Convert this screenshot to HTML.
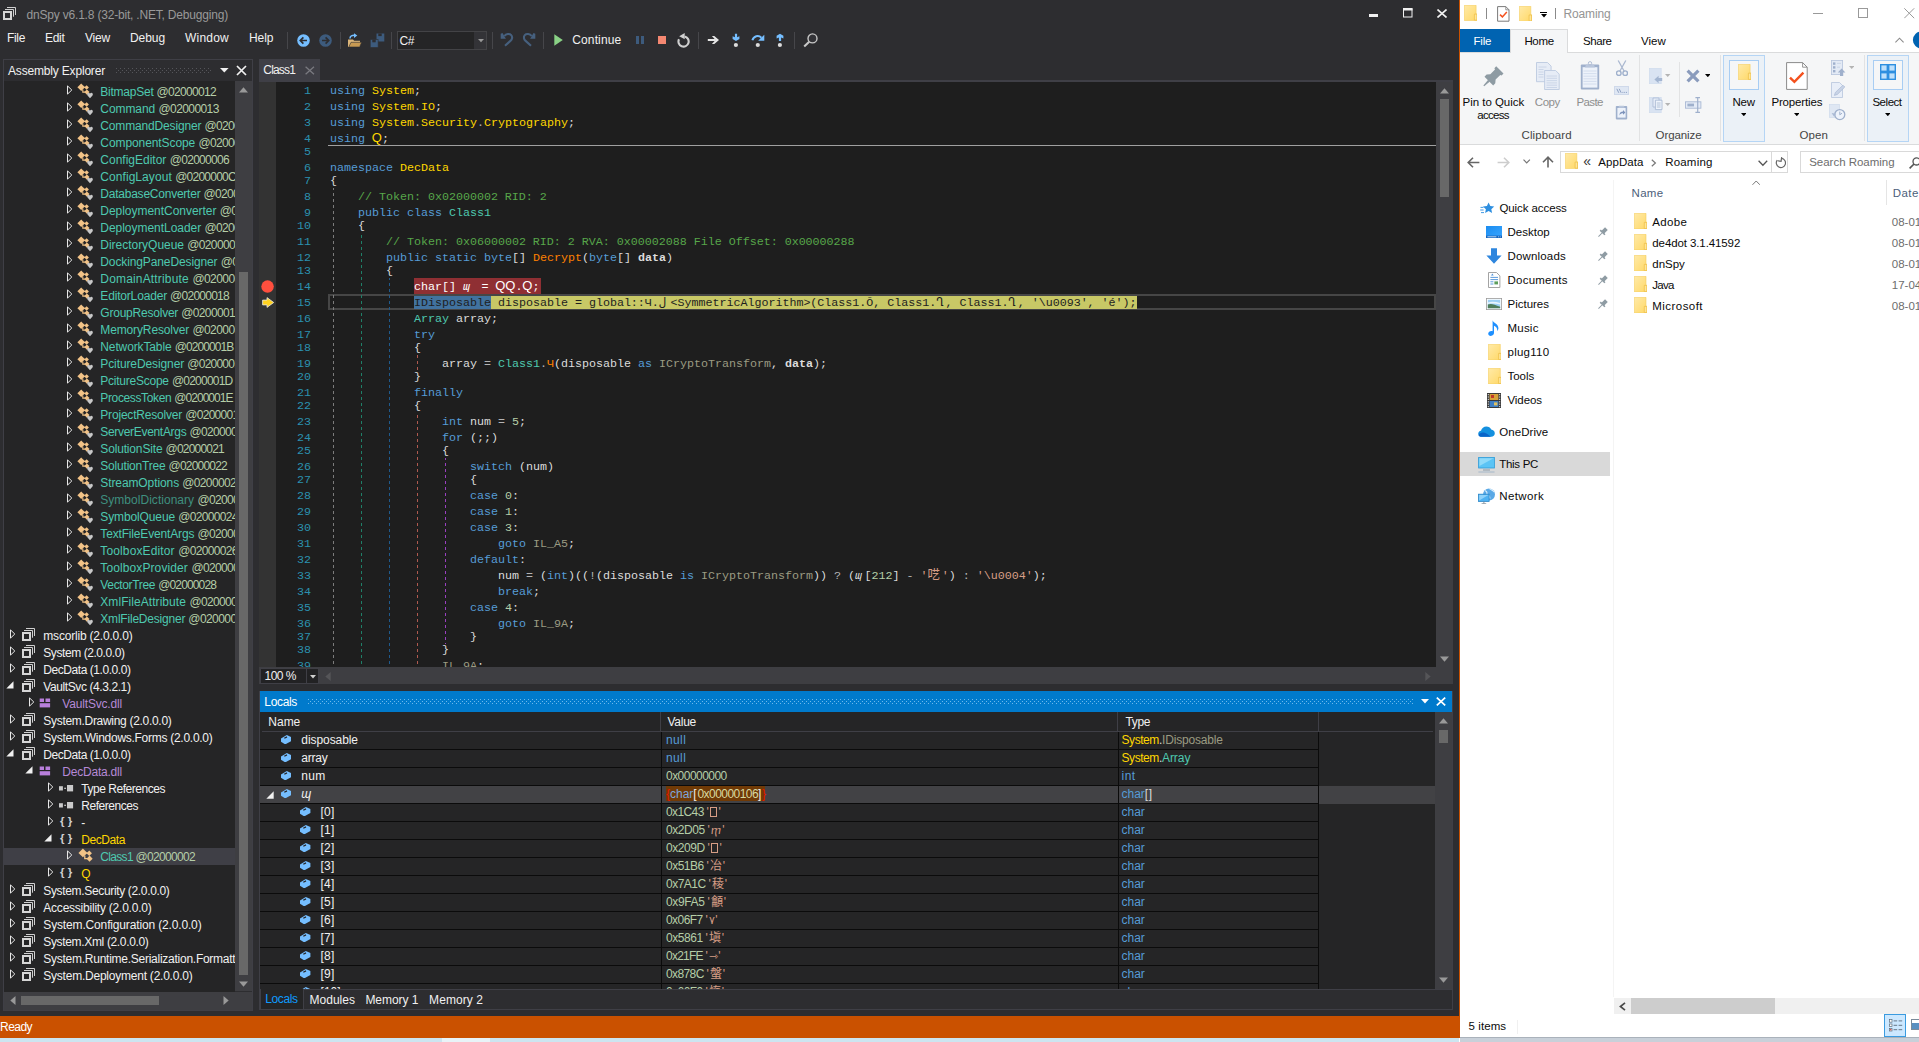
<!DOCTYPE html>
<html><head><meta charset="utf-8"><title>dnSpy</title><style>
html,body{margin:0;padding:0;}
body{width:1919px;height:1042px;overflow:hidden;background:#fff;font-family:"Liberation Sans", "Noto Sans CJK SC", sans-serif;font-size:12px;position:relative;}
.t{position:absolute;white-space:pre;font-size:12px;line-height:17px;}
.r{position:absolute;}
.c{position:absolute;overflow:hidden;}
.m{position:absolute;white-space:pre;font-family:"Liberation Mono","DejaVu Sans Mono","Noto Sans CJK SC",monospace;font-size:11.7px;letter-spacing:-0.02px;line-height:16px;}
.mu{position:absolute;white-space:pre;font-size:13px;line-height:16px;}
</style></head>
<body>
<!-- chrome -->
<div class="r" style="left:0px;top:0px;width:1459px;height:1038px;background:#2d2d30;"></div>
<div class="r" style="left:1459px;top:0px;width:1px;height:1038px;background:#ca5100;"></div>
<svg class="r" style="left:3px;top:7px;" width="14" height="14" viewBox="0 0 14 14"><path d="M4 0.5H12.5V8" fill="none" stroke="#d0d0d0" stroke-width="1"/><path d="M2 2.5H10.5V9.7" fill="none" stroke="#d0d0d0" stroke-width="1"/><rect x="1" y="5" width="7" height="7" fill="none" stroke="#d6d6d6" stroke-width="2"/></svg>
<span class="t" style="left:26.5px;top:7px;color:#999999;letter-spacing:-0.192px;">dnSpy v6.1.8 (32-bit, .NET, Debugging)</span>
<div class="r" style="left:1369px;top:14px;width:9px;height:3px;background:#f1f1f1;"></div>
<svg class="r" style="left:1403px;top:8px;" width="10" height="10" viewBox="0 0 10 10"><rect x="0.5" y="1" width="8.5" height="8" fill="none" stroke="#f1f1f1" stroke-width="1"/><rect x="0" y="0" width="9.5" height="2.5" fill="#f1f1f1"/></svg>
<svg class="r" style="left:1437px;top:9px;" width="10" height="9" viewBox="0 0 10 9"><path d="M0.5 0.5L9.5 8.5M9.5 0.5L0.5 8.5" stroke="#f1f1f1" stroke-width="1.6" fill="none"/></svg>
<span class="t" style="left:7.0px;top:30px;color:#f1f1f1;letter-spacing:-0.336px;">File</span>
<span class="t" style="left:45.0px;top:30px;color:#f1f1f1;letter-spacing:-0.297px;">Edit</span>
<span class="t" style="left:85.0px;top:30px;color:#f1f1f1;letter-spacing:-0.199px;">View</span>
<span class="t" style="left:130.0px;top:30px;color:#f1f1f1;letter-spacing:-0.075px;">Debug</span>
<span class="t" style="left:185.0px;top:30px;color:#f1f1f1;letter-spacing:0.219px;">Window</span>
<span class="t" style="left:249.0px;top:30px;color:#f1f1f1;letter-spacing:-0.047px;">Help</span>
<div class="r" style="left:287px;top:31.5px;width:1px;height:17px;background:#46464a;"></div>
<div class="r" style="left:339.5px;top:31.5px;width:1px;height:17px;background:#46464a;"></div>
<div class="r" style="left:391px;top:31.5px;width:1px;height:17px;background:#46464a;"></div>
<div class="r" style="left:491.5px;top:31.5px;width:1px;height:17px;background:#46464a;"></div>
<div class="r" style="left:543px;top:31.5px;width:1px;height:17px;background:#46464a;"></div>
<div class="r" style="left:698px;top:31.5px;width:1px;height:17px;background:#46464a;"></div>
<div class="r" style="left:794.3px;top:31.5px;width:1px;height:17px;background:#46464a;"></div>
<svg class="r" style="left:296.5px;top:33.5px;" width="13" height="13" viewBox="0 0 13 13"><circle cx="6.5" cy="6.5" r="6.3" fill="#75beff"/><path d="M10 6.5H3.6M6.4 3.4L3.3 6.5L6.4 9.6" stroke="#2d2d30" stroke-width="1.7" fill="none"/></svg>
<svg class="r" style="left:318.5px;top:33.5px;" width="13" height="13" viewBox="0 0 13 13"><circle cx="6.5" cy="6.5" r="6.3" fill="#3d5b7d"/><path d="M3 6.5H9.4M6.6 3.4L9.7 6.5L6.6 9.6" stroke="#2d2d30" stroke-width="1.7" fill="none"/></svg>
<svg class="r" style="left:347px;top:32.5px;" width="16" height="15" viewBox="0 0 16 15">
      <path d="M1 6.5h5l1.2 1.2H13V14H1z" fill="#dcb67a"/>
      <path d="M1.8 14L4 9.3h10.6L12.6 14z" fill="#c89a53" stroke="#2d2d30" stroke-width="0.6"/>
      <path d="M3 5.5C3 3 5 2.2 8 2.4" stroke="#75beff" stroke-width="1.5" fill="none"/>
      <path d="M7 0.2L10.3 2.6L7 5z" fill="#75beff"/>
    </svg>
<svg class="r" style="left:370px;top:32.5px;" width="15" height="15" viewBox="0 0 15 15">
      <path d="M6.5 0.5h7.8v8h-7.8z" fill="#3d5b7d"/><rect x="8.3" y="0.5" width="3.4" height="2.6" fill="#2d2d30"/>
      <path d="M0.3 6.5h7.9v8H0.3z" fill="#3d5b7d" stroke="#2d2d30" stroke-width="0.6"/><rect x="2.3" y="6.7" width="3.4" height="2.6" fill="#2d2d30"/>
    </svg>
<div class="r" style="left:397px;top:31px;width:90px;height:18.5px;background:#252526;box-sizing:border-box;border:1px solid #434346;"></div>
<div class="r" style="left:474px;top:32px;width:12px;height:16.5px;background:#333337;"></div>
<svg class="r" style="left:477.5px;top:38.5px;" width="6" height="4" viewBox="0 0 6 4"><path d="M0 0h6L3 3.2z" fill="#999"/></svg>
<span class="t" style="left:399.5px;top:33px;color:#f1f1f1;letter-spacing:-0.422px;">C#</span>
<svg class="r" style="left:500px;top:32px;" width="14" height="16" viewBox="0 0 14 16"><path d="M0.7 1.7L2.5 0.9L5.9 6.8H0.7z" fill="#46607e"/><path d="M4.4 4C6 1.7 9.6 1.3 11.2 3.1C12.9 5 12 7.5 10.4 8.9L5 13.8" stroke="#46607e" stroke-width="2.1" fill="none"/></svg>
<svg class="r" style="left:521.6px;top:32px;" width="14" height="16" viewBox="0 0 14 16"><g transform="translate(14 0) scale(-1 1)"><path d="M0.7 1.7L2.5 0.9L5.9 6.8H0.7z" fill="#46607e"/><path d="M4.4 4C6 1.7 9.6 1.3 11.2 3.1C12.9 5 12 7.5 10.4 8.9L5 13.8" stroke="#46607e" stroke-width="2.1" fill="none"/></g></svg>
<svg class="r" style="left:554px;top:34px;" width="10" height="12" viewBox="0 0 10 12"><path d="M0.3 0.2L8.8 6L0.3 11.8z" fill="#89d185"/></svg>
<span class="t" style="left:572.3px;top:32px;color:#f1f1f1;letter-spacing:0.119px;">Continue</span>
<div class="r" style="left:635.5px;top:35.5px;width:3px;height:8.7px;background:#3d5b7d;"></div>
<div class="r" style="left:641px;top:35.5px;width:3px;height:8.7px;background:#3d5b7d;"></div>
<div class="r" style="left:657.5px;top:35.7px;width:8.7px;height:8.5px;background:#f48771;"></div>
<svg class="r" style="left:676px;top:32px;" width="16" height="16" viewBox="0 0 16 16"><path d="M3 7.2A5.1 5.1 0 1 0 8.6 4.5" stroke="#d0d0d0" stroke-width="2.1" fill="none"/><path d="M3.2 4.2L8.7 0.9V7.2z" fill="#d0d0d0"/></svg>
<svg class="r" style="left:707px;top:35px;" width="13" height="10" viewBox="0 0 13 10"><path d="M0.8 5H8.5" stroke="#e6e6e6" stroke-width="2"/><path d="M4.9 1h2.4L12 5L7.3 9H4.9L8.5 5z" fill="#e6e6e6"/></svg>
<svg class="r" style="left:731px;top:33px;" width="10" height="15" viewBox="0 0 10 15"><path d="M3.9 0.7h2.2v3.6L8.4 3.2v2.7L5 8L1.6 5.9V3.2L3.9 4.3z" fill="#75beff"/><circle cx="4.9" cy="12" r="2.1" fill="#dcdcdc"/></svg>
<svg class="r" style="left:751px;top:33px;" width="14" height="15" viewBox="0 0 14 15"><path d="M1.4 7.2C2.6 3.2 7.4 1.6 10.4 4.8" stroke="#75beff" stroke-width="2" fill="none"/><path d="M13.3 1.8V7.8H7.2z" fill="#75beff"/><circle cx="6.8" cy="12" r="2.1" fill="#dcdcdc"/></svg>
<svg class="r" style="left:775px;top:33px;" width="10" height="15" viewBox="0 0 10 15"><path d="M3.9 8h2.2V4.4L8.4 5.5V2.8L5 0.7L1.6 2.8v2.7L3.9 4.4z" fill="#75beff"/><circle cx="4.9" cy="12" r="2.1" fill="#dcdcdc"/></svg>
<svg class="r" style="left:802.5px;top:32.5px;" width="16" height="15" viewBox="0 0 16 15"><circle cx="9.5" cy="5.4" r="4.5" stroke="#c8c8c8" stroke-width="1.4" fill="#333337"/><path d="M6.2 8.8L1.2 13.5" stroke="#c8c8c8" stroke-width="2.1"/></svg>
<div class="r" style="left:0px;top:1016px;width:1459px;height:22px;background:#ca5100;"></div>
<span class="t" style="left:0.0px;top:1019px;color:#ffffff;letter-spacing:-0.537px;">Ready</span>
<div class="r" style="left:0px;top:1038px;width:1459px;height:4px;background:#cce5f0;"></div>
<!-- tree -->
<div class="r" style="left:3px;top:59px;width:249.5px;height:951.5px;background:#2d2d30;box-sizing:border-box;border:1px solid #3f3f46;"></div>
<span class="t" style="left:8.0px;top:63px;color:#f1f1f1;letter-spacing:-0.178px;">Assembly Explorer</span>
<svg class="r" style="left:116px;top:68px" width="96" height="5"><defs><pattern id="gp1" width="4" height="4" patternUnits="userSpaceOnUse"><rect x="0" y="0" width="1" height="1" fill="#55555a"/><rect x="2" y="2" width="1" height="1" fill="#55555a"/></pattern></defs><rect width="96" height="5" fill="url(#gp1)"/></svg>
<svg class="r" style="left:220px;top:67.5px;" width="9" height="5" viewBox="0 0 9 5"><path d="M0 0h8.6L4.3 4.5z" fill="#f1f1f1"/></svg>
<svg class="r" style="left:235.5px;top:64.5px;" width="11" height="11" viewBox="0 0 11 11"><path d="M1 1L10 10M10 1L1 10" stroke="#f1f1f1" stroke-width="1.7"/></svg>
<div class="r" style="left:4px;top:81px;width:231px;height:910.5px;background:#252526;"></div>
<div class="r" style="left:235px;top:81px;width:17px;height:910px;background:#3e3e42;"></div>
<svg class="r" style="left:239px;top:87px;" width="9" height="6" viewBox="0 0 9 6"><path d="M4.5 0.3L9 5.5H0z" fill="#999"/></svg>
<svg class="r" style="left:239px;top:980.5px;" width="9" height="6" viewBox="0 0 9 6"><path d="M4.5 5.7L9 0.5H0z" fill="#999"/></svg>
<div class="r" style="left:239px;top:272px;width:9px;height:703px;background:#686868;"></div>
<div class="r" style="left:4px;top:991.5px;width:248px;height:18px;background:#3e3e42;"></div>
<svg class="r" style="left:10px;top:996px;" width="6" height="9" viewBox="0 0 6 9"><path d="M0.3 4.5L5.5 0v9z" fill="#999"/></svg>
<svg class="r" style="left:223px;top:996px;" width="6" height="9" viewBox="0 0 6 9"><path d="M5.7 4.5L0.5 0v9z" fill="#999"/></svg>
<div class="r" style="left:21px;top:996px;width:138px;height:9px;background:#686868;"></div>
<div class="r" style="left:4px;top:848px;width:231px;height:17px;background:#3f3f46;"></div>
<div class="c" style="left:4px;top:81px;width:231px;height:910.5px;">
<svg class="r" style="left:63.0px;top:3.9000000000000004px;" width="7" height="10" viewBox="0 0 7 10"><path d="M0.5 0.9L4.8 5L0.5 9.1z" fill="none" stroke="#e8e8e8" stroke-width="1"/></svg>
<svg class="r" style="left:72.5px;top:2px;" width="16.5" height="16" viewBox="0 0 16.5 16"><g fill="#f2c387"><path d="M0.4 4.2L4.2 0.4L8 4.2L4.2 8z"/><path d="M7.3 4.5L9.6 2.2L11.9 4.5L9.6 6.8z"/><path d="M7.3 9.1L9.9 6.5L12.5 9.1L9.9 11.7z"/><path d="M6.9 3.8h1.4v1H6.9z"/></g><path d="M5.8 6.4V9.1H8.2" stroke="#f2c387" stroke-width="1.1" fill="none"/><path d="M13 15.2L10.5 12.4C9.7 11.3 10.4 9.8 11.6 9.8C12.3 9.8 12.8 10.2 13 10.8C13.2 10.2 13.7 9.8 14.4 9.8C15.6 9.8 16.3 11.3 15.5 12.4z" fill="#c8c8c8"/></svg>
<span class="t" style="left:96.3px;top:3px;color:#4ec9b0;letter-spacing:-0.236px;">BitmapSet </span>
<span class="t" style="left:152.6px;top:3px;color:#b5cea8;letter-spacing:-0.691px;">@02000012</span>
<svg class="r" style="left:63.0px;top:20.9px;" width="7" height="10" viewBox="0 0 7 10"><path d="M0.5 0.9L4.8 5L0.5 9.1z" fill="none" stroke="#e8e8e8" stroke-width="1"/></svg>
<svg class="r" style="left:72.5px;top:19px;" width="16.5" height="16" viewBox="0 0 16.5 16"><g fill="#f2c387"><path d="M0.4 4.2L4.2 0.4L8 4.2L4.2 8z"/><path d="M7.3 4.5L9.6 2.2L11.9 4.5L9.6 6.8z"/><path d="M7.3 9.1L9.9 6.5L12.5 9.1L9.9 11.7z"/><path d="M6.9 3.8h1.4v1H6.9z"/></g><path d="M5.8 6.4V9.1H8.2" stroke="#f2c387" stroke-width="1.1" fill="none"/><path d="M13 15.2L10.5 12.4C9.7 11.3 10.4 9.8 11.6 9.8C12.3 9.8 12.8 10.2 13 10.8C13.2 10.2 13.7 9.8 14.4 9.8C15.6 9.8 16.3 11.3 15.5 12.4z" fill="#c8c8c8"/></svg>
<span class="t" style="left:96.3px;top:20px;color:#4ec9b0;letter-spacing:-0.064px;">Command </span>
<span class="t" style="left:154.5px;top:20px;color:#b5cea8;letter-spacing:-0.595px;">@02000013</span>
<svg class="r" style="left:63.0px;top:37.9px;" width="7" height="10" viewBox="0 0 7 10"><path d="M0.5 0.9L4.8 5L0.5 9.1z" fill="none" stroke="#e8e8e8" stroke-width="1"/></svg>
<svg class="r" style="left:72.5px;top:36px;" width="16.5" height="16" viewBox="0 0 16.5 16"><g fill="#f2c387"><path d="M0.4 4.2L4.2 0.4L8 4.2L4.2 8z"/><path d="M7.3 4.5L9.6 2.2L11.9 4.5L9.6 6.8z"/><path d="M7.3 9.1L9.9 6.5L12.5 9.1L9.9 11.7z"/><path d="M6.9 3.8h1.4v1H6.9z"/></g><path d="M5.8 6.4V9.1H8.2" stroke="#f2c387" stroke-width="1.1" fill="none"/><path d="M13 15.2L10.5 12.4C9.7 11.3 10.4 9.8 11.6 9.8C12.3 9.8 12.8 10.2 13 10.8C13.2 10.2 13.7 9.8 14.4 9.8C15.6 9.8 16.3 11.3 15.5 12.4z" fill="#c8c8c8"/></svg>
<span class="t" style="left:96.3px;top:37px;color:#4ec9b0;letter-spacing:-0.155px;">CommandDesigner </span>
<span class="t" style="left:200.5px;top:37px;color:#b5cea8;letter-spacing:-0.652px;">@02000014</span>
<svg class="r" style="left:63.0px;top:54.9px;" width="7" height="10" viewBox="0 0 7 10"><path d="M0.5 0.9L4.8 5L0.5 9.1z" fill="none" stroke="#e8e8e8" stroke-width="1"/></svg>
<svg class="r" style="left:72.5px;top:53px;" width="16.5" height="16" viewBox="0 0 16.5 16"><g fill="#f2c387"><path d="M0.4 4.2L4.2 0.4L8 4.2L4.2 8z"/><path d="M7.3 4.5L9.6 2.2L11.9 4.5L9.6 6.8z"/><path d="M7.3 9.1L9.9 6.5L12.5 9.1L9.9 11.7z"/><path d="M6.9 3.8h1.4v1H6.9z"/></g><path d="M5.8 6.4V9.1H8.2" stroke="#f2c387" stroke-width="1.1" fill="none"/><path d="M13 15.2L10.5 12.4C9.7 11.3 10.4 9.8 11.6 9.8C12.3 9.8 12.8 10.2 13 10.8C13.2 10.2 13.7 9.8 14.4 9.8C15.6 9.8 16.3 11.3 15.5 12.4z" fill="#c8c8c8"/></svg>
<span class="t" style="left:96.3px;top:54px;color:#4ec9b0;letter-spacing:-0.083px;">ComponentScope </span>
<span class="t" style="left:194.5px;top:54px;color:#b5cea8;letter-spacing:-0.652px;">@02000015</span>
<svg class="r" style="left:63.0px;top:71.9px;" width="7" height="10" viewBox="0 0 7 10"><path d="M0.5 0.9L4.8 5L0.5 9.1z" fill="none" stroke="#e8e8e8" stroke-width="1"/></svg>
<svg class="r" style="left:72.5px;top:70px;" width="16.5" height="16" viewBox="0 0 16.5 16"><g fill="#f2c387"><path d="M0.4 4.2L4.2 0.4L8 4.2L4.2 8z"/><path d="M7.3 4.5L9.6 2.2L11.9 4.5L9.6 6.8z"/><path d="M7.3 9.1L9.9 6.5L12.5 9.1L9.9 11.7z"/><path d="M6.9 3.8h1.4v1H6.9z"/></g><path d="M5.8 6.4V9.1H8.2" stroke="#f2c387" stroke-width="1.1" fill="none"/><path d="M13 15.2L10.5 12.4C9.7 11.3 10.4 9.8 11.6 9.8C12.3 9.8 12.8 10.2 13 10.8C13.2 10.2 13.7 9.8 14.4 9.8C15.6 9.8 16.3 11.3 15.5 12.4z" fill="#c8c8c8"/></svg>
<span class="t" style="left:96.3px;top:71px;color:#4ec9b0;letter-spacing:0.000px;">ConfigEditor </span>
<span class="t" style="left:165.7px;top:71px;color:#b5cea8;letter-spacing:-0.695px;">@02000006</span>
<svg class="r" style="left:63.0px;top:88.9px;" width="7" height="10" viewBox="0 0 7 10"><path d="M0.5 0.9L4.8 5L0.5 9.1z" fill="none" stroke="#e8e8e8" stroke-width="1"/></svg>
<svg class="r" style="left:72.5px;top:87px;" width="16.5" height="16" viewBox="0 0 16.5 16"><g fill="#f2c387"><path d="M0.4 4.2L4.2 0.4L8 4.2L4.2 8z"/><path d="M7.3 4.5L9.6 2.2L11.9 4.5L9.6 6.8z"/><path d="M7.3 9.1L9.9 6.5L12.5 9.1L9.9 11.7z"/><path d="M6.9 3.8h1.4v1H6.9z"/></g><path d="M5.8 6.4V9.1H8.2" stroke="#f2c387" stroke-width="1.1" fill="none"/><path d="M13 15.2L10.5 12.4C9.7 11.3 10.4 9.8 11.6 9.8C12.3 9.8 12.8 10.2 13 10.8C13.2 10.2 13.7 9.8 14.4 9.8C15.6 9.8 16.3 11.3 15.5 12.4z" fill="#c8c8c8"/></svg>
<span class="t" style="left:96.3px;top:88px;color:#4ec9b0;letter-spacing:0.064px;">ConfigLayout </span>
<span class="t" style="left:171.2px;top:88px;color:#b5cea8;letter-spacing:-0.762px;">@0200000C</span>
<svg class="r" style="left:63.0px;top:105.9px;" width="7" height="10" viewBox="0 0 7 10"><path d="M0.5 0.9L4.8 5L0.5 9.1z" fill="none" stroke="#e8e8e8" stroke-width="1"/></svg>
<svg class="r" style="left:72.5px;top:104px;" width="16.5" height="16" viewBox="0 0 16.5 16"><g fill="#f2c387"><path d="M0.4 4.2L4.2 0.4L8 4.2L4.2 8z"/><path d="M7.3 4.5L9.6 2.2L11.9 4.5L9.6 6.8z"/><path d="M7.3 9.1L9.9 6.5L12.5 9.1L9.9 11.7z"/><path d="M6.9 3.8h1.4v1H6.9z"/></g><path d="M5.8 6.4V9.1H8.2" stroke="#f2c387" stroke-width="1.1" fill="none"/><path d="M13 15.2L10.5 12.4C9.7 11.3 10.4 9.8 11.6 9.8C12.3 9.8 12.8 10.2 13 10.8C13.2 10.2 13.7 9.8 14.4 9.8C15.6 9.8 16.3 11.3 15.5 12.4z" fill="#c8c8c8"/></svg>
<span class="t" style="left:96.3px;top:105px;color:#4ec9b0;letter-spacing:-0.231px;">DatabaseConverter </span>
<span class="t" style="left:199.5px;top:105px;color:#b5cea8;letter-spacing:-0.652px;">@02000016</span>
<svg class="r" style="left:63.0px;top:122.9px;" width="7" height="10" viewBox="0 0 7 10"><path d="M0.5 0.9L4.8 5L0.5 9.1z" fill="none" stroke="#e8e8e8" stroke-width="1"/></svg>
<svg class="r" style="left:72.5px;top:121px;" width="16.5" height="16" viewBox="0 0 16.5 16"><g fill="#f2c387"><path d="M0.4 4.2L4.2 0.4L8 4.2L4.2 8z"/><path d="M7.3 4.5L9.6 2.2L11.9 4.5L9.6 6.8z"/><path d="M7.3 9.1L9.9 6.5L12.5 9.1L9.9 11.7z"/><path d="M6.9 3.8h1.4v1H6.9z"/></g><path d="M5.8 6.4V9.1H8.2" stroke="#f2c387" stroke-width="1.1" fill="none"/><path d="M13 15.2L10.5 12.4C9.7 11.3 10.4 9.8 11.6 9.8C12.3 9.8 12.8 10.2 13 10.8C13.2 10.2 13.7 9.8 14.4 9.8C15.6 9.8 16.3 11.3 15.5 12.4z" fill="#c8c8c8"/></svg>
<span class="t" style="left:96.3px;top:122px;color:#4ec9b0;letter-spacing:-0.032px;">DeploymentConverter </span>
<span class="t" style="left:215.7px;top:122px;color:#b5cea8;letter-spacing:-0.652px;">@02000017</span>
<svg class="r" style="left:63.0px;top:139.9px;" width="7" height="10" viewBox="0 0 7 10"><path d="M0.5 0.9L4.8 5L0.5 9.1z" fill="none" stroke="#e8e8e8" stroke-width="1"/></svg>
<svg class="r" style="left:72.5px;top:138px;" width="16.5" height="16" viewBox="0 0 16.5 16"><g fill="#f2c387"><path d="M0.4 4.2L4.2 0.4L8 4.2L4.2 8z"/><path d="M7.3 4.5L9.6 2.2L11.9 4.5L9.6 6.8z"/><path d="M7.3 9.1L9.9 6.5L12.5 9.1L9.9 11.7z"/><path d="M6.9 3.8h1.4v1H6.9z"/></g><path d="M5.8 6.4V9.1H8.2" stroke="#f2c387" stroke-width="1.1" fill="none"/><path d="M13 15.2L10.5 12.4C9.7 11.3 10.4 9.8 11.6 9.8C12.3 9.8 12.8 10.2 13 10.8C13.2 10.2 13.7 9.8 14.4 9.8C15.6 9.8 16.3 11.3 15.5 12.4z" fill="#c8c8c8"/></svg>
<span class="t" style="left:96.3px;top:139px;color:#4ec9b0;letter-spacing:-0.029px;">DeploymentLoader </span>
<span class="t" style="left:200.5px;top:139px;color:#b5cea8;letter-spacing:-0.652px;">@02000007</span>
<svg class="r" style="left:63.0px;top:156.9px;" width="7" height="10" viewBox="0 0 7 10"><path d="M0.5 0.9L4.8 5L0.5 9.1z" fill="none" stroke="#e8e8e8" stroke-width="1"/></svg>
<svg class="r" style="left:72.5px;top:155px;" width="16.5" height="16" viewBox="0 0 16.5 16"><g fill="#f2c387"><path d="M0.4 4.2L4.2 0.4L8 4.2L4.2 8z"/><path d="M7.3 4.5L9.6 2.2L11.9 4.5L9.6 6.8z"/><path d="M7.3 9.1L9.9 6.5L12.5 9.1L9.9 11.7z"/><path d="M6.9 3.8h1.4v1H6.9z"/></g><path d="M5.8 6.4V9.1H8.2" stroke="#f2c387" stroke-width="1.1" fill="none"/><path d="M13 15.2L10.5 12.4C9.7 11.3 10.4 9.8 11.6 9.8C12.3 9.8 12.8 10.2 13 10.8C13.2 10.2 13.7 9.8 14.4 9.8C15.6 9.8 16.3 11.3 15.5 12.4z" fill="#c8c8c8"/></svg>
<span class="t" style="left:96.3px;top:156px;color:#4ec9b0;letter-spacing:-0.023px;">DirectoryQueue </span>
<span class="t" style="left:183.3px;top:156px;color:#b5cea8;letter-spacing:-0.652px;">@02000008</span>
<svg class="r" style="left:63.0px;top:173.9px;" width="7" height="10" viewBox="0 0 7 10"><path d="M0.5 0.9L4.8 5L0.5 9.1z" fill="none" stroke="#e8e8e8" stroke-width="1"/></svg>
<svg class="r" style="left:72.5px;top:172px;" width="16.5" height="16" viewBox="0 0 16.5 16"><g fill="#f2c387"><path d="M0.4 4.2L4.2 0.4L8 4.2L4.2 8z"/><path d="M7.3 4.5L9.6 2.2L11.9 4.5L9.6 6.8z"/><path d="M7.3 9.1L9.9 6.5L12.5 9.1L9.9 11.7z"/><path d="M6.9 3.8h1.4v1H6.9z"/></g><path d="M5.8 6.4V9.1H8.2" stroke="#f2c387" stroke-width="1.1" fill="none"/><path d="M13 15.2L10.5 12.4C9.7 11.3 10.4 9.8 11.6 9.8C12.3 9.8 12.8 10.2 13 10.8C13.2 10.2 13.7 9.8 14.4 9.8C15.6 9.8 16.3 11.3 15.5 12.4z" fill="#c8c8c8"/></svg>
<span class="t" style="left:96.3px;top:173px;color:#4ec9b0;letter-spacing:-0.116px;">DockingPaneDesigner </span>
<span class="t" style="left:216.7px;top:173px;color:#b5cea8;letter-spacing:-0.652px;">@02000009</span>
<svg class="r" style="left:63.0px;top:190.9px;" width="7" height="10" viewBox="0 0 7 10"><path d="M0.5 0.9L4.8 5L0.5 9.1z" fill="none" stroke="#e8e8e8" stroke-width="1"/></svg>
<svg class="r" style="left:72.5px;top:189px;" width="16.5" height="16" viewBox="0 0 16.5 16"><g fill="#f2c387"><path d="M0.4 4.2L4.2 0.4L8 4.2L4.2 8z"/><path d="M7.3 4.5L9.6 2.2L11.9 4.5L9.6 6.8z"/><path d="M7.3 9.1L9.9 6.5L12.5 9.1L9.9 11.7z"/><path d="M6.9 3.8h1.4v1H6.9z"/></g><path d="M5.8 6.4V9.1H8.2" stroke="#f2c387" stroke-width="1.1" fill="none"/><path d="M13 15.2L10.5 12.4C9.7 11.3 10.4 9.8 11.6 9.8C12.3 9.8 12.8 10.2 13 10.8C13.2 10.2 13.7 9.8 14.4 9.8C15.6 9.8 16.3 11.3 15.5 12.4z" fill="#c8c8c8"/></svg>
<span class="t" style="left:96.3px;top:190px;color:#4ec9b0;letter-spacing:0.170px;">DomainAttribute </span>
<span class="t" style="left:188.4px;top:190px;color:#b5cea8;letter-spacing:-0.575px;">@0200000A</span>
<svg class="r" style="left:63.0px;top:207.9px;" width="7" height="10" viewBox="0 0 7 10"><path d="M0.5 0.9L4.8 5L0.5 9.1z" fill="none" stroke="#e8e8e8" stroke-width="1"/></svg>
<svg class="r" style="left:72.5px;top:206px;" width="16.5" height="16" viewBox="0 0 16.5 16"><g fill="#f2c387"><path d="M0.4 4.2L4.2 0.4L8 4.2L4.2 8z"/><path d="M7.3 4.5L9.6 2.2L11.9 4.5L9.6 6.8z"/><path d="M7.3 9.1L9.9 6.5L12.5 9.1L9.9 11.7z"/><path d="M6.9 3.8h1.4v1H6.9z"/></g><path d="M5.8 6.4V9.1H8.2" stroke="#f2c387" stroke-width="1.1" fill="none"/><path d="M13 15.2L10.5 12.4C9.7 11.3 10.4 9.8 11.6 9.8C12.3 9.8 12.8 10.2 13 10.8C13.2 10.2 13.7 9.8 14.4 9.8C15.6 9.8 16.3 11.3 15.5 12.4z" fill="#c8c8c8"/></svg>
<span class="t" style="left:96.3px;top:207px;color:#4ec9b0;letter-spacing:-0.170px;">EditorLoader </span>
<span class="t" style="left:166.1px;top:207px;color:#b5cea8;letter-spacing:-0.746px;">@02000018</span>
<svg class="r" style="left:63.0px;top:224.9px;" width="7" height="10" viewBox="0 0 7 10"><path d="M0.5 0.9L4.8 5L0.5 9.1z" fill="none" stroke="#e8e8e8" stroke-width="1"/></svg>
<svg class="r" style="left:72.5px;top:223px;" width="16.5" height="16" viewBox="0 0 16.5 16"><g fill="#f2c387"><path d="M0.4 4.2L4.2 0.4L8 4.2L4.2 8z"/><path d="M7.3 4.5L9.6 2.2L11.9 4.5L9.6 6.8z"/><path d="M7.3 9.1L9.9 6.5L12.5 9.1L9.9 11.7z"/><path d="M6.9 3.8h1.4v1H6.9z"/></g><path d="M5.8 6.4V9.1H8.2" stroke="#f2c387" stroke-width="1.1" fill="none"/><path d="M13 15.2L10.5 12.4C9.7 11.3 10.4 9.8 11.6 9.8C12.3 9.8 12.8 10.2 13 10.8C13.2 10.2 13.7 9.8 14.4 9.8C15.6 9.8 16.3 11.3 15.5 12.4z" fill="#c8c8c8"/></svg>
<span class="t" style="left:96.3px;top:224px;color:#4ec9b0;letter-spacing:-0.220px;">GroupResolver </span>
<span class="t" style="left:177.3px;top:224px;color:#b5cea8;letter-spacing:-0.652px;">@02000019</span>
<svg class="r" style="left:63.0px;top:241.9px;" width="7" height="10" viewBox="0 0 7 10"><path d="M0.5 0.9L4.8 5L0.5 9.1z" fill="none" stroke="#e8e8e8" stroke-width="1"/></svg>
<svg class="r" style="left:72.5px;top:240px;" width="16.5" height="16" viewBox="0 0 16.5 16"><g fill="#f2c387"><path d="M0.4 4.2L4.2 0.4L8 4.2L4.2 8z"/><path d="M7.3 4.5L9.6 2.2L11.9 4.5L9.6 6.8z"/><path d="M7.3 9.1L9.9 6.5L12.5 9.1L9.9 11.7z"/><path d="M6.9 3.8h1.4v1H6.9z"/></g><path d="M5.8 6.4V9.1H8.2" stroke="#f2c387" stroke-width="1.1" fill="none"/><path d="M13 15.2L10.5 12.4C9.7 11.3 10.4 9.8 11.6 9.8C12.3 9.8 12.8 10.2 13 10.8C13.2 10.2 13.7 9.8 14.4 9.8C15.6 9.8 16.3 11.3 15.5 12.4z" fill="#c8c8c8"/></svg>
<span class="t" style="left:96.3px;top:241px;color:#4ec9b0;letter-spacing:-0.129px;">MemoryResolver </span>
<span class="t" style="left:188.4px;top:241px;color:#b5cea8;letter-spacing:-0.575px;">@0200001A</span>
<svg class="r" style="left:63.0px;top:258.9px;" width="7" height="10" viewBox="0 0 7 10"><path d="M0.5 0.9L4.8 5L0.5 9.1z" fill="none" stroke="#e8e8e8" stroke-width="1"/></svg>
<svg class="r" style="left:72.5px;top:257px;" width="16.5" height="16" viewBox="0 0 16.5 16"><g fill="#f2c387"><path d="M0.4 4.2L4.2 0.4L8 4.2L4.2 8z"/><path d="M7.3 4.5L9.6 2.2L11.9 4.5L9.6 6.8z"/><path d="M7.3 9.1L9.9 6.5L12.5 9.1L9.9 11.7z"/><path d="M6.9 3.8h1.4v1H6.9z"/></g><path d="M5.8 6.4V9.1H8.2" stroke="#f2c387" stroke-width="1.1" fill="none"/><path d="M13 15.2L10.5 12.4C9.7 11.3 10.4 9.8 11.6 9.8C12.3 9.8 12.8 10.2 13 10.8C13.2 10.2 13.7 9.8 14.4 9.8C15.6 9.8 16.3 11.3 15.5 12.4z" fill="#c8c8c8"/></svg>
<span class="t" style="left:96.3px;top:258px;color:#4ec9b0;letter-spacing:-0.123px;">NetworkTable </span>
<span class="t" style="left:170.7px;top:258px;color:#b5cea8;letter-spacing:-0.905px;">@0200001B</span>
<svg class="r" style="left:63.0px;top:275.9px;" width="7" height="10" viewBox="0 0 7 10"><path d="M0.5 0.9L4.8 5L0.5 9.1z" fill="none" stroke="#e8e8e8" stroke-width="1"/></svg>
<svg class="r" style="left:72.5px;top:274px;" width="16.5" height="16" viewBox="0 0 16.5 16"><g fill="#f2c387"><path d="M0.4 4.2L4.2 0.4L8 4.2L4.2 8z"/><path d="M7.3 4.5L9.6 2.2L11.9 4.5L9.6 6.8z"/><path d="M7.3 9.1L9.9 6.5L12.5 9.1L9.9 11.7z"/><path d="M6.9 3.8h1.4v1H6.9z"/></g><path d="M5.8 6.4V9.1H8.2" stroke="#f2c387" stroke-width="1.1" fill="none"/><path d="M13 15.2L10.5 12.4C9.7 11.3 10.4 9.8 11.6 9.8C12.3 9.8 12.8 10.2 13 10.8C13.2 10.2 13.7 9.8 14.4 9.8C15.6 9.8 16.3 11.3 15.5 12.4z" fill="#c8c8c8"/></svg>
<span class="t" style="left:96.3px;top:275px;color:#4ec9b0;letter-spacing:-0.105px;">PcitureDesigner </span>
<span class="t" style="left:183.3px;top:275px;color:#b5cea8;letter-spacing:-0.762px;">@0200001C</span>
<svg class="r" style="left:63.0px;top:292.9px;" width="7" height="10" viewBox="0 0 7 10"><path d="M0.5 0.9L4.8 5L0.5 9.1z" fill="none" stroke="#e8e8e8" stroke-width="1"/></svg>
<svg class="r" style="left:72.5px;top:291px;" width="16.5" height="16" viewBox="0 0 16.5 16"><g fill="#f2c387"><path d="M0.4 4.2L4.2 0.4L8 4.2L4.2 8z"/><path d="M7.3 4.5L9.6 2.2L11.9 4.5L9.6 6.8z"/><path d="M7.3 9.1L9.9 6.5L12.5 9.1L9.9 11.7z"/><path d="M6.9 3.8h1.4v1H6.9z"/></g><path d="M5.8 6.4V9.1H8.2" stroke="#f2c387" stroke-width="1.1" fill="none"/><path d="M13 15.2L10.5 12.4C9.7 11.3 10.4 9.8 11.6 9.8C12.3 9.8 12.8 10.2 13 10.8C13.2 10.2 13.7 9.8 14.4 9.8C15.6 9.8 16.3 11.3 15.5 12.4z" fill="#c8c8c8"/></svg>
<span class="t" style="left:96.3px;top:292px;color:#4ec9b0;letter-spacing:-0.242px;">PcitureScope </span>
<span class="t" style="left:167.9px;top:292px;color:#b5cea8;letter-spacing:-0.772px;">@0200001D</span>
<svg class="r" style="left:63.0px;top:309.9px;" width="7" height="10" viewBox="0 0 7 10"><path d="M0.5 0.9L4.8 5L0.5 9.1z" fill="none" stroke="#e8e8e8" stroke-width="1"/></svg>
<svg class="r" style="left:72.5px;top:308px;" width="16.5" height="16" viewBox="0 0 16.5 16"><g fill="#f2c387"><path d="M0.4 4.2L4.2 0.4L8 4.2L4.2 8z"/><path d="M7.3 4.5L9.6 2.2L11.9 4.5L9.6 6.8z"/><path d="M7.3 9.1L9.9 6.5L12.5 9.1L9.9 11.7z"/><path d="M6.9 3.8h1.4v1H6.9z"/></g><path d="M5.8 6.4V9.1H8.2" stroke="#f2c387" stroke-width="1.1" fill="none"/><path d="M13 15.2L10.5 12.4C9.7 11.3 10.4 9.8 11.6 9.8C12.3 9.8 12.8 10.2 13 10.8C13.2 10.2 13.7 9.8 14.4 9.8C15.6 9.8 16.3 11.3 15.5 12.4z" fill="#c8c8c8"/></svg>
<span class="t" style="left:96.3px;top:309px;color:#4ec9b0;letter-spacing:-0.362px;">ProcessToken </span>
<span class="t" style="left:170.3px;top:309px;color:#b5cea8;letter-spacing:-0.967px;">@0200001E</span>
<svg class="r" style="left:63.0px;top:326.9px;" width="7" height="10" viewBox="0 0 7 10"><path d="M0.5 0.9L4.8 5L0.5 9.1z" fill="none" stroke="#e8e8e8" stroke-width="1"/></svg>
<svg class="r" style="left:72.5px;top:325px;" width="16.5" height="16" viewBox="0 0 16.5 16"><g fill="#f2c387"><path d="M0.4 4.2L4.2 0.4L8 4.2L4.2 8z"/><path d="M7.3 4.5L9.6 2.2L11.9 4.5L9.6 6.8z"/><path d="M7.3 9.1L9.9 6.5L12.5 9.1L9.9 11.7z"/><path d="M6.9 3.8h1.4v1H6.9z"/></g><path d="M5.8 6.4V9.1H8.2" stroke="#f2c387" stroke-width="1.1" fill="none"/><path d="M13 15.2L10.5 12.4C9.7 11.3 10.4 9.8 11.6 9.8C12.3 9.8 12.8 10.2 13 10.8C13.2 10.2 13.7 9.8 14.4 9.8C15.6 9.8 16.3 11.3 15.5 12.4z" fill="#c8c8c8"/></svg>
<span class="t" style="left:96.3px;top:326px;color:#4ec9b0;letter-spacing:-0.189px;">ProjectResolver </span>
<span class="t" style="left:181.3px;top:326px;color:#b5cea8;letter-spacing:-0.725px;">@0200001F</span>
<svg class="r" style="left:63.0px;top:343.9px;" width="7" height="10" viewBox="0 0 7 10"><path d="M0.5 0.9L4.8 5L0.5 9.1z" fill="none" stroke="#e8e8e8" stroke-width="1"/></svg>
<svg class="r" style="left:72.5px;top:342px;" width="16.5" height="16" viewBox="0 0 16.5 16"><g fill="#f2c387"><path d="M0.4 4.2L4.2 0.4L8 4.2L4.2 8z"/><path d="M7.3 4.5L9.6 2.2L11.9 4.5L9.6 6.8z"/><path d="M7.3 9.1L9.9 6.5L12.5 9.1L9.9 11.7z"/><path d="M6.9 3.8h1.4v1H6.9z"/></g><path d="M5.8 6.4V9.1H8.2" stroke="#f2c387" stroke-width="1.1" fill="none"/><path d="M13 15.2L10.5 12.4C9.7 11.3 10.4 9.8 11.6 9.8C12.3 9.8 12.8 10.2 13 10.8C13.2 10.2 13.7 9.8 14.4 9.8C15.6 9.8 16.3 11.3 15.5 12.4z" fill="#c8c8c8"/></svg>
<span class="t" style="left:96.3px;top:343px;color:#4ec9b0;letter-spacing:-0.312px;">ServerEventArgs </span>
<span class="t" style="left:185.4px;top:343px;color:#b5cea8;letter-spacing:-0.652px;">@02000020</span>
<svg class="r" style="left:63.0px;top:360.9px;" width="7" height="10" viewBox="0 0 7 10"><path d="M0.5 0.9L4.8 5L0.5 9.1z" fill="none" stroke="#e8e8e8" stroke-width="1"/></svg>
<svg class="r" style="left:72.5px;top:359px;" width="16.5" height="16" viewBox="0 0 16.5 16"><g fill="#f2c387"><path d="M0.4 4.2L4.2 0.4L8 4.2L4.2 8z"/><path d="M7.3 4.5L9.6 2.2L11.9 4.5L9.6 6.8z"/><path d="M7.3 9.1L9.9 6.5L12.5 9.1L9.9 11.7z"/><path d="M6.9 3.8h1.4v1H6.9z"/></g><path d="M5.8 6.4V9.1H8.2" stroke="#f2c387" stroke-width="1.1" fill="none"/><path d="M13 15.2L10.5 12.4C9.7 11.3 10.4 9.8 11.6 9.8C12.3 9.8 12.8 10.2 13 10.8C13.2 10.2 13.7 9.8 14.4 9.8C15.6 9.8 16.3 11.3 15.5 12.4z" fill="#c8c8c8"/></svg>
<span class="t" style="left:96.3px;top:360px;color:#4ec9b0;letter-spacing:-0.160px;">SolutionSite </span>
<span class="t" style="left:161.6px;top:360px;color:#b5cea8;letter-spacing:-0.799px;">@02000021</span>
<svg class="r" style="left:63.0px;top:377.9px;" width="7" height="10" viewBox="0 0 7 10"><path d="M0.5 0.9L4.8 5L0.5 9.1z" fill="none" stroke="#e8e8e8" stroke-width="1"/></svg>
<svg class="r" style="left:72.5px;top:376px;" width="16.5" height="16" viewBox="0 0 16.5 16"><g fill="#f2c387"><path d="M0.4 4.2L4.2 0.4L8 4.2L4.2 8z"/><path d="M7.3 4.5L9.6 2.2L11.9 4.5L9.6 6.8z"/><path d="M7.3 9.1L9.9 6.5L12.5 9.1L9.9 11.7z"/><path d="M6.9 3.8h1.4v1H6.9z"/></g><path d="M5.8 6.4V9.1H8.2" stroke="#f2c387" stroke-width="1.1" fill="none"/><path d="M13 15.2L10.5 12.4C9.7 11.3 10.4 9.8 11.6 9.8C12.3 9.8 12.8 10.2 13 10.8C13.2 10.2 13.7 9.8 14.4 9.8C15.6 9.8 16.3 11.3 15.5 12.4z" fill="#c8c8c8"/></svg>
<span class="t" style="left:96.3px;top:377px;color:#4ec9b0;letter-spacing:-0.203px;">SolutionTree </span>
<span class="t" style="left:164.6px;top:377px;color:#b5cea8;letter-spacing:-0.797px;">@02000022</span>
<svg class="r" style="left:63.0px;top:394.9px;" width="7" height="10" viewBox="0 0 7 10"><path d="M0.5 0.9L4.8 5L0.5 9.1z" fill="none" stroke="#e8e8e8" stroke-width="1"/></svg>
<svg class="r" style="left:72.5px;top:393px;" width="16.5" height="16" viewBox="0 0 16.5 16"><g fill="#f2c387"><path d="M0.4 4.2L4.2 0.4L8 4.2L4.2 8z"/><path d="M7.3 4.5L9.6 2.2L11.9 4.5L9.6 6.8z"/><path d="M7.3 9.1L9.9 6.5L12.5 9.1L9.9 11.7z"/><path d="M6.9 3.8h1.4v1H6.9z"/></g><path d="M5.8 6.4V9.1H8.2" stroke="#f2c387" stroke-width="1.1" fill="none"/><path d="M13 15.2L10.5 12.4C9.7 11.3 10.4 9.8 11.6 9.8C12.3 9.8 12.8 10.2 13 10.8C13.2 10.2 13.7 9.8 14.4 9.8C15.6 9.8 16.3 11.3 15.5 12.4z" fill="#c8c8c8"/></svg>
<span class="t" style="left:96.3px;top:394px;color:#4ec9b0;letter-spacing:-0.100px;">StreamOptions </span>
<span class="t" style="left:178.3px;top:394px;color:#b5cea8;letter-spacing:-0.652px;">@02000023</span>
<svg class="r" style="left:63.0px;top:411.9px;" width="7" height="10" viewBox="0 0 7 10"><path d="M0.5 0.9L4.8 5L0.5 9.1z" fill="none" stroke="#e8e8e8" stroke-width="1"/></svg>
<svg class="r" style="left:72.5px;top:410px;" width="16.5" height="16" viewBox="0 0 16.5 16"><g fill="#f2c387"><path d="M0.4 4.2L4.2 0.4L8 4.2L4.2 8z"/><path d="M7.3 4.5L9.6 2.2L11.9 4.5L9.6 6.8z"/><path d="M7.3 9.1L9.9 6.5L12.5 9.1L9.9 11.7z"/><path d="M6.9 3.8h1.4v1H6.9z"/></g><path d="M5.8 6.4V9.1H8.2" stroke="#f2c387" stroke-width="1.1" fill="none"/><path d="M13 15.2L10.5 12.4C9.7 11.3 10.4 9.8 11.6 9.8C12.3 9.8 12.8 10.2 13 10.8C13.2 10.2 13.7 9.8 14.4 9.8C15.6 9.8 16.3 11.3 15.5 12.4z" fill="#c8c8c8"/></svg>
<span class="t" style="left:96.3px;top:411px;color:#3f8f7f;letter-spacing:0.026px;">SymbolDictionary </span>
<span class="t" style="left:193.5px;top:411px;color:#b5cea8;letter-spacing:-0.652px;">@02000024</span>
<svg class="r" style="left:63.0px;top:428.9px;" width="7" height="10" viewBox="0 0 7 10"><path d="M0.5 0.9L4.8 5L0.5 9.1z" fill="none" stroke="#e8e8e8" stroke-width="1"/></svg>
<svg class="r" style="left:72.5px;top:427px;" width="16.5" height="16" viewBox="0 0 16.5 16"><g fill="#f2c387"><path d="M0.4 4.2L4.2 0.4L8 4.2L4.2 8z"/><path d="M7.3 4.5L9.6 2.2L11.9 4.5L9.6 6.8z"/><path d="M7.3 9.1L9.9 6.5L12.5 9.1L9.9 11.7z"/><path d="M6.9 3.8h1.4v1H6.9z"/></g><path d="M5.8 6.4V9.1H8.2" stroke="#f2c387" stroke-width="1.1" fill="none"/><path d="M13 15.2L10.5 12.4C9.7 11.3 10.4 9.8 11.6 9.8C12.3 9.8 12.8 10.2 13 10.8C13.2 10.2 13.7 9.8 14.4 9.8C15.6 9.8 16.3 11.3 15.5 12.4z" fill="#c8c8c8"/></svg>
<span class="t" style="left:96.3px;top:428px;color:#4ec9b0;letter-spacing:-0.122px;">SymbolQueue </span>
<span class="t" style="left:174.2px;top:428px;color:#b5cea8;letter-spacing:-0.652px;">@02000024</span>
<svg class="r" style="left:63.0px;top:445.9px;" width="7" height="10" viewBox="0 0 7 10"><path d="M0.5 0.9L4.8 5L0.5 9.1z" fill="none" stroke="#e8e8e8" stroke-width="1"/></svg>
<svg class="r" style="left:72.5px;top:444px;" width="16.5" height="16" viewBox="0 0 16.5 16"><g fill="#f2c387"><path d="M0.4 4.2L4.2 0.4L8 4.2L4.2 8z"/><path d="M7.3 4.5L9.6 2.2L11.9 4.5L9.6 6.8z"/><path d="M7.3 9.1L9.9 6.5L12.5 9.1L9.9 11.7z"/><path d="M6.9 3.8h1.4v1H6.9z"/></g><path d="M5.8 6.4V9.1H8.2" stroke="#f2c387" stroke-width="1.1" fill="none"/><path d="M13 15.2L10.5 12.4C9.7 11.3 10.4 9.8 11.6 9.8C12.3 9.8 12.8 10.2 13 10.8C13.2 10.2 13.7 9.8 14.4 9.8C15.6 9.8 16.3 11.3 15.5 12.4z" fill="#c8c8c8"/></svg>
<span class="t" style="left:96.3px;top:445px;color:#4ec9b0;letter-spacing:-0.161px;">TextFileEventArgs </span>
<span class="t" style="left:193.5px;top:445px;color:#b5cea8;letter-spacing:-0.652px;">@02000025</span>
<svg class="r" style="left:63.0px;top:462.9px;" width="7" height="10" viewBox="0 0 7 10"><path d="M0.5 0.9L4.8 5L0.5 9.1z" fill="none" stroke="#e8e8e8" stroke-width="1"/></svg>
<svg class="r" style="left:72.5px;top:461px;" width="16.5" height="16" viewBox="0 0 16.5 16"><g fill="#f2c387"><path d="M0.4 4.2L4.2 0.4L8 4.2L4.2 8z"/><path d="M7.3 4.5L9.6 2.2L11.9 4.5L9.6 6.8z"/><path d="M7.3 9.1L9.9 6.5L12.5 9.1L9.9 11.7z"/><path d="M6.9 3.8h1.4v1H6.9z"/></g><path d="M5.8 6.4V9.1H8.2" stroke="#f2c387" stroke-width="1.1" fill="none"/><path d="M13 15.2L10.5 12.4C9.7 11.3 10.4 9.8 11.6 9.8C12.3 9.8 12.8 10.2 13 10.8C13.2 10.2 13.7 9.8 14.4 9.8C15.6 9.8 16.3 11.3 15.5 12.4z" fill="#c8c8c8"/></svg>
<span class="t" style="left:96.3px;top:462px;color:#4ec9b0;letter-spacing:0.134px;">ToolboxEditor </span>
<span class="t" style="left:174.2px;top:462px;color:#b5cea8;letter-spacing:-0.652px;">@02000026</span>
<svg class="r" style="left:63.0px;top:479.9px;" width="7" height="10" viewBox="0 0 7 10"><path d="M0.5 0.9L4.8 5L0.5 9.1z" fill="none" stroke="#e8e8e8" stroke-width="1"/></svg>
<svg class="r" style="left:72.5px;top:478px;" width="16.5" height="16" viewBox="0 0 16.5 16"><g fill="#f2c387"><path d="M0.4 4.2L4.2 0.4L8 4.2L4.2 8z"/><path d="M7.3 4.5L9.6 2.2L11.9 4.5L9.6 6.8z"/><path d="M7.3 9.1L9.9 6.5L12.5 9.1L9.9 11.7z"/><path d="M6.9 3.8h1.4v1H6.9z"/></g><path d="M5.8 6.4V9.1H8.2" stroke="#f2c387" stroke-width="1.1" fill="none"/><path d="M13 15.2L10.5 12.4C9.7 11.3 10.4 9.8 11.6 9.8C12.3 9.8 12.8 10.2 13 10.8C13.2 10.2 13.7 9.8 14.4 9.8C15.6 9.8 16.3 11.3 15.5 12.4z" fill="#c8c8c8"/></svg>
<span class="t" style="left:96.3px;top:479px;color:#4ec9b0;letter-spacing:0.106px;">ToolboxProvider </span>
<span class="t" style="left:187.4px;top:479px;color:#b5cea8;letter-spacing:-0.652px;">@02000027</span>
<svg class="r" style="left:63.0px;top:496.9px;" width="7" height="10" viewBox="0 0 7 10"><path d="M0.5 0.9L4.8 5L0.5 9.1z" fill="none" stroke="#e8e8e8" stroke-width="1"/></svg>
<svg class="r" style="left:72.5px;top:495px;" width="16.5" height="16" viewBox="0 0 16.5 16"><g fill="#f2c387"><path d="M0.4 4.2L4.2 0.4L8 4.2L4.2 8z"/><path d="M7.3 4.5L9.6 2.2L11.9 4.5L9.6 6.8z"/><path d="M7.3 9.1L9.9 6.5L12.5 9.1L9.9 11.7z"/><path d="M6.9 3.8h1.4v1H6.9z"/></g><path d="M5.8 6.4V9.1H8.2" stroke="#f2c387" stroke-width="1.1" fill="none"/><path d="M13 15.2L10.5 12.4C9.7 11.3 10.4 9.8 11.6 9.8C12.3 9.8 12.8 10.2 13 10.8C13.2 10.2 13.7 9.8 14.4 9.8C15.6 9.8 16.3 11.3 15.5 12.4z" fill="#c8c8c8"/></svg>
<span class="t" style="left:96.3px;top:496px;color:#4ec9b0;letter-spacing:-0.340px;">VectorTree </span>
<span class="t" style="left:154.2px;top:496px;color:#b5cea8;letter-spacing:-0.859px;">@02000028</span>
<svg class="r" style="left:63.0px;top:513.9px;" width="7" height="10" viewBox="0 0 7 10"><path d="M0.5 0.9L4.8 5L0.5 9.1z" fill="none" stroke="#e8e8e8" stroke-width="1"/></svg>
<svg class="r" style="left:72.5px;top:512px;" width="16.5" height="16" viewBox="0 0 16.5 16"><g fill="#f2c387"><path d="M0.4 4.2L4.2 0.4L8 4.2L4.2 8z"/><path d="M7.3 4.5L9.6 2.2L11.9 4.5L9.6 6.8z"/><path d="M7.3 9.1L9.9 6.5L12.5 9.1L9.9 11.7z"/><path d="M6.9 3.8h1.4v1H6.9z"/></g><path d="M5.8 6.4V9.1H8.2" stroke="#f2c387" stroke-width="1.1" fill="none"/><path d="M13 15.2L10.5 12.4C9.7 11.3 10.4 9.8 11.6 9.8C12.3 9.8 12.8 10.2 13 10.8C13.2 10.2 13.7 9.8 14.4 9.8C15.6 9.8 16.3 11.3 15.5 12.4z" fill="#c8c8c8"/></svg>
<span class="t" style="left:96.3px;top:513px;color:#4ec9b0;letter-spacing:0.060px;">XmlFileAttribute </span>
<span class="t" style="left:185.4px;top:513px;color:#b5cea8;letter-spacing:-0.652px;">@02000029</span>
<svg class="r" style="left:63.0px;top:530.9px;" width="7" height="10" viewBox="0 0 7 10"><path d="M0.5 0.9L4.8 5L0.5 9.1z" fill="none" stroke="#e8e8e8" stroke-width="1"/></svg>
<svg class="r" style="left:72.5px;top:529px;" width="16.5" height="16" viewBox="0 0 16.5 16"><g fill="#f2c387"><path d="M0.4 4.2L4.2 0.4L8 4.2L4.2 8z"/><path d="M7.3 4.5L9.6 2.2L11.9 4.5L9.6 6.8z"/><path d="M7.3 9.1L9.9 6.5L12.5 9.1L9.9 11.7z"/><path d="M6.9 3.8h1.4v1H6.9z"/></g><path d="M5.8 6.4V9.1H8.2" stroke="#f2c387" stroke-width="1.1" fill="none"/><path d="M13 15.2L10.5 12.4C9.7 11.3 10.4 9.8 11.6 9.8C12.3 9.8 12.8 10.2 13 10.8C13.2 10.2 13.7 9.8 14.4 9.8C15.6 9.8 16.3 11.3 15.5 12.4z" fill="#c8c8c8"/></svg>
<span class="t" style="left:96.3px;top:530px;color:#4ec9b0;letter-spacing:-0.207px;">XmlFileDesigner </span>
<span class="t" style="left:184.3px;top:530px;color:#b5cea8;letter-spacing:-0.575px;">@0200002A</span>
<svg class="r" style="left:6.0px;top:547.9px;" width="7" height="10" viewBox="0 0 7 10"><path d="M0.5 0.9L4.8 5L0.5 9.1z" fill="none" stroke="#e8e8e8" stroke-width="1"/></svg>
<svg class="r" style="left:18px;top:547px;" width="14" height="14" viewBox="0 0 14 14"><path d="M4 0.5H12.5V8" fill="none" stroke="#d0d0d0" stroke-width="1"/><path d="M2 2.5H10.5V9.7" fill="none" stroke="#d0d0d0" stroke-width="1"/><rect x="1" y="5" width="7" height="7" fill="none" stroke="#d6d6d6" stroke-width="2"/></svg>
<span class="t" style="left:39.3px;top:547px;color:#f1f1f1;letter-spacing:-0.195px;">mscorlib (2.0.0.0)</span>
<svg class="r" style="left:6.0px;top:564.9px;" width="7" height="10" viewBox="0 0 7 10"><path d="M0.5 0.9L4.8 5L0.5 9.1z" fill="none" stroke="#e8e8e8" stroke-width="1"/></svg>
<svg class="r" style="left:18px;top:564px;" width="14" height="14" viewBox="0 0 14 14"><path d="M4 0.5H12.5V8" fill="none" stroke="#d0d0d0" stroke-width="1"/><path d="M2 2.5H10.5V9.7" fill="none" stroke="#d0d0d0" stroke-width="1"/><rect x="1" y="5" width="7" height="7" fill="none" stroke="#d6d6d6" stroke-width="2"/></svg>
<span class="t" style="left:39.3px;top:564px;color:#f1f1f1;letter-spacing:-0.427px;">System (2.0.0.0)</span>
<svg class="r" style="left:6.0px;top:581.9px;" width="7" height="10" viewBox="0 0 7 10"><path d="M0.5 0.9L4.8 5L0.5 9.1z" fill="none" stroke="#e8e8e8" stroke-width="1"/></svg>
<svg class="r" style="left:18px;top:581px;" width="14" height="14" viewBox="0 0 14 14"><path d="M4 0.5H12.5V8" fill="none" stroke="#d0d0d0" stroke-width="1"/><path d="M2 2.5H10.5V9.7" fill="none" stroke="#d0d0d0" stroke-width="1"/><rect x="1" y="5" width="7" height="7" fill="none" stroke="#d6d6d6" stroke-width="2"/></svg>
<span class="t" style="left:39.3px;top:581px;color:#f1f1f1;letter-spacing:-0.442px;">DecData (1.0.0.0)</span>
<svg class="r" style="left:1.9px;top:599.8px;" width="8" height="8" viewBox="0 0 8 8"><path d="M7.5 0.3V7.5H0.3z" fill="#f1f1f1"/></svg>
<svg class="r" style="left:18px;top:598px;" width="14" height="14" viewBox="0 0 14 14"><path d="M4 0.5H12.5V8" fill="none" stroke="#d0d0d0" stroke-width="1"/><path d="M2 2.5H10.5V9.7" fill="none" stroke="#d0d0d0" stroke-width="1"/><rect x="1" y="5" width="7" height="7" fill="none" stroke="#d6d6d6" stroke-width="2"/></svg>
<span class="t" style="left:39.3px;top:598px;color:#f1f1f1;letter-spacing:-0.406px;">VaultSvc (4.3.2.1)</span>
<svg class="r" style="left:25.0px;top:615.9px;" width="7" height="10" viewBox="0 0 7 10"><path d="M0.5 0.9L4.8 5L0.5 9.1z" fill="none" stroke="#e8e8e8" stroke-width="1"/></svg>
<svg class="r" style="left:35px;top:615.5px;" width="12" height="12" viewBox="0 0 12 12"><g fill="#b97fdc"><rect x="0.7" y="1.5" width="4.3" height="3.5"/><rect x="6.5" y="1.5" width="4.6" height="3.5"/><rect x="0.7" y="6.2" width="10.4" height="4.2"/></g></svg>
<span class="t" style="left:58.3px;top:615px;color:#b589d6;letter-spacing:-0.176px;">VaultSvc.dll</span>
<svg class="r" style="left:6.0px;top:632.9px;" width="7" height="10" viewBox="0 0 7 10"><path d="M0.5 0.9L4.8 5L0.5 9.1z" fill="none" stroke="#e8e8e8" stroke-width="1"/></svg>
<svg class="r" style="left:18px;top:632px;" width="14" height="14" viewBox="0 0 14 14"><path d="M4 0.5H12.5V8" fill="none" stroke="#d0d0d0" stroke-width="1"/><path d="M2 2.5H10.5V9.7" fill="none" stroke="#d0d0d0" stroke-width="1"/><rect x="1" y="5" width="7" height="7" fill="none" stroke="#d6d6d6" stroke-width="2"/></svg>
<span class="t" style="left:39.3px;top:632px;color:#f1f1f1;letter-spacing:-0.300px;">System.Drawing (2.0.0.0)</span>
<svg class="r" style="left:6.0px;top:649.9px;" width="7" height="10" viewBox="0 0 7 10"><path d="M0.5 0.9L4.8 5L0.5 9.1z" fill="none" stroke="#e8e8e8" stroke-width="1"/></svg>
<svg class="r" style="left:18px;top:649px;" width="14" height="14" viewBox="0 0 14 14"><path d="M4 0.5H12.5V8" fill="none" stroke="#d0d0d0" stroke-width="1"/><path d="M2 2.5H10.5V9.7" fill="none" stroke="#d0d0d0" stroke-width="1"/><rect x="1" y="5" width="7" height="7" fill="none" stroke="#d6d6d6" stroke-width="2"/></svg>
<span class="t" style="left:39.3px;top:649px;color:#f1f1f1;letter-spacing:-0.273px;">System.Windows.Forms (2.0.0.0)</span>
<svg class="r" style="left:1.9px;top:667.8px;" width="8" height="8" viewBox="0 0 8 8"><path d="M7.5 0.3V7.5H0.3z" fill="#f1f1f1"/></svg>
<svg class="r" style="left:18px;top:666px;" width="14" height="14" viewBox="0 0 14 14"><path d="M4 0.5H12.5V8" fill="none" stroke="#d0d0d0" stroke-width="1"/><path d="M2 2.5H10.5V9.7" fill="none" stroke="#d0d0d0" stroke-width="1"/><rect x="1" y="5" width="7" height="7" fill="none" stroke="#d6d6d6" stroke-width="2"/></svg>
<span class="t" style="left:39.3px;top:666px;color:#f1f1f1;letter-spacing:-0.442px;">DecData (1.0.0.0)</span>
<svg class="r" style="left:20.9px;top:684.8px;" width="8" height="8" viewBox="0 0 8 8"><path d="M7.5 0.3V7.5H0.3z" fill="#f1f1f1"/></svg>
<svg class="r" style="left:35px;top:683.5px;" width="12" height="12" viewBox="0 0 12 12"><g fill="#b97fdc"><rect x="0.7" y="1.5" width="4.3" height="3.5"/><rect x="6.5" y="1.5" width="4.6" height="3.5"/><rect x="0.7" y="6.2" width="10.4" height="4.2"/></g></svg>
<span class="t" style="left:58.3px;top:683px;color:#b589d6;letter-spacing:-0.212px;">DecData.dll</span>
<svg class="r" style="left:44.0px;top:700.9px;" width="7" height="10" viewBox="0 0 7 10"><path d="M0.5 0.9L4.8 5L0.5 9.1z" fill="none" stroke="#e8e8e8" stroke-width="1"/></svg>
<svg class="r" style="left:55px;top:703.5px;" width="15" height="8" viewBox="0 0 15 8"><g fill="#cacaca"><rect x="0" y="1.2" width="3.9" height="4.3"/><rect x="8" y="0" width="6.1" height="6.4"/><rect x="5.3" y="2.7" width="1.6" height="1.3"/></g></svg>
<span class="t" style="left:77.3px;top:700px;color:#f1f1f1;letter-spacing:-0.468px;">Type References</span>
<svg class="r" style="left:44.0px;top:717.9px;" width="7" height="10" viewBox="0 0 7 10"><path d="M0.5 0.9L4.8 5L0.5 9.1z" fill="none" stroke="#e8e8e8" stroke-width="1"/></svg>
<svg class="r" style="left:55px;top:720.5px;" width="15" height="8" viewBox="0 0 15 8"><g fill="#cacaca"><rect x="0" y="1.2" width="3.9" height="4.3"/><rect x="8" y="0" width="6.1" height="6.4"/><rect x="5.3" y="2.7" width="1.6" height="1.3"/></g></svg>
<span class="t" style="left:77.3px;top:717px;color:#f1f1f1;letter-spacing:-0.467px;">References</span>
<svg class="r" style="left:44.0px;top:734.9px;" width="7" height="10" viewBox="0 0 7 10"><path d="M0.5 0.9L4.8 5L0.5 9.1z" fill="none" stroke="#e8e8e8" stroke-width="1"/></svg>
<span class="t" style="left:55.9px;top:732px;color:#d0d0d0;font-size:11.5px;font-weight:bold;letter-spacing:0.100px;">{ }</span>
<span class="t" style="left:77.3px;top:734px;color:#f1f1f1;letter-spacing:0.200px;">-</span>
<svg class="r" style="left:39.9px;top:752.8px;" width="8" height="8" viewBox="0 0 8 8"><path d="M7.5 0.3V7.5H0.3z" fill="#f1f1f1"/></svg>
<span class="t" style="left:55.9px;top:749px;color:#d0d0d0;font-size:11.5px;font-weight:bold;letter-spacing:0.100px;">{ }</span>
<span class="t" style="left:77.3px;top:751px;color:#ffd700;letter-spacing:-0.427px;">DecData</span>
<svg class="r" style="left:63.0px;top:768.9px;" width="7" height="10" viewBox="0 0 7 10"><path d="M0.5 0.9L4.8 5L0.5 9.1z" fill="none" stroke="#e8e8e8" stroke-width="1"/></svg>
<svg class="r" style="left:73.5px;top:767.2px;" width="15" height="15" viewBox="0 0 15 15"><g transform="scale(1.17)"><g fill="#f2c387"><path d="M0.4 4.2L4.2 0.4L8 4.2L4.2 8z"/><path d="M7.3 4.5L9.6 2.2L11.9 4.5L9.6 6.8z"/><path d="M7.3 9.1L9.9 6.5L12.5 9.1L9.9 11.7z"/><path d="M6.9 3.8h1.4v1H6.9z"/></g><path d="M5.8 6.4V9.1H8.2" stroke="#f2c387" stroke-width="1.1" fill="none"/></g></svg>
<span class="t" style="left:96.3px;top:768px;color:#4ec9b0;letter-spacing:-0.679px;">Class1 </span>
<span class="t" style="left:131.6px;top:768px;color:#b5cea8;letter-spacing:-0.682px;">@02000002</span>
<svg class="r" style="left:44.0px;top:785.9px;" width="7" height="10" viewBox="0 0 7 10"><path d="M0.5 0.9L4.8 5L0.5 9.1z" fill="none" stroke="#e8e8e8" stroke-width="1"/></svg>
<span class="t" style="left:55.9px;top:783px;color:#d0d0d0;font-size:11.5px;font-weight:bold;letter-spacing:0.100px;">{ }</span>
<span class="t" style="left:77.3px;top:785px;color:#ffd700;letter-spacing:-0.144px;">Q</span>
<svg class="r" style="left:6.0px;top:802.9px;" width="7" height="10" viewBox="0 0 7 10"><path d="M0.5 0.9L4.8 5L0.5 9.1z" fill="none" stroke="#e8e8e8" stroke-width="1"/></svg>
<svg class="r" style="left:18px;top:802px;" width="14" height="14" viewBox="0 0 14 14"><path d="M4 0.5H12.5V8" fill="none" stroke="#d0d0d0" stroke-width="1"/><path d="M2 2.5H10.5V9.7" fill="none" stroke="#d0d0d0" stroke-width="1"/><rect x="1" y="5" width="7" height="7" fill="none" stroke="#d6d6d6" stroke-width="2"/></svg>
<span class="t" style="left:39.3px;top:802px;color:#f1f1f1;letter-spacing:-0.341px;">System.Security (2.0.0.0)</span>
<svg class="r" style="left:6.0px;top:819.9px;" width="7" height="10" viewBox="0 0 7 10"><path d="M0.5 0.9L4.8 5L0.5 9.1z" fill="none" stroke="#e8e8e8" stroke-width="1"/></svg>
<svg class="r" style="left:18px;top:819px;" width="14" height="14" viewBox="0 0 14 14"><path d="M4 0.5H12.5V8" fill="none" stroke="#d0d0d0" stroke-width="1"/><path d="M2 2.5H10.5V9.7" fill="none" stroke="#d0d0d0" stroke-width="1"/><rect x="1" y="5" width="7" height="7" fill="none" stroke="#d6d6d6" stroke-width="2"/></svg>
<span class="t" style="left:39.3px;top:819px;color:#f1f1f1;letter-spacing:-0.225px;">Accessibility (2.0.0.0)</span>
<svg class="r" style="left:6.0px;top:836.9px;" width="7" height="10" viewBox="0 0 7 10"><path d="M0.5 0.9L4.8 5L0.5 9.1z" fill="none" stroke="#e8e8e8" stroke-width="1"/></svg>
<svg class="r" style="left:18px;top:836px;" width="14" height="14" viewBox="0 0 14 14"><path d="M4 0.5H12.5V8" fill="none" stroke="#d0d0d0" stroke-width="1"/><path d="M2 2.5H10.5V9.7" fill="none" stroke="#d0d0d0" stroke-width="1"/><rect x="1" y="5" width="7" height="7" fill="none" stroke="#d6d6d6" stroke-width="2"/></svg>
<span class="t" style="left:39.3px;top:836px;color:#f1f1f1;letter-spacing:-0.152px;">System.Configuration (2.0.0.0)</span>
<svg class="r" style="left:6.0px;top:853.9px;" width="7" height="10" viewBox="0 0 7 10"><path d="M0.5 0.9L4.8 5L0.5 9.1z" fill="none" stroke="#e8e8e8" stroke-width="1"/></svg>
<svg class="r" style="left:18px;top:853px;" width="14" height="14" viewBox="0 0 14 14"><path d="M4 0.5H12.5V8" fill="none" stroke="#d0d0d0" stroke-width="1"/><path d="M2 2.5H10.5V9.7" fill="none" stroke="#d0d0d0" stroke-width="1"/><rect x="1" y="5" width="7" height="7" fill="none" stroke="#d6d6d6" stroke-width="2"/></svg>
<span class="t" style="left:39.3px;top:853px;color:#f1f1f1;letter-spacing:-0.342px;">System.Xml (2.0.0.0)</span>
<svg class="r" style="left:6.0px;top:870.9px;" width="7" height="10" viewBox="0 0 7 10"><path d="M0.5 0.9L4.8 5L0.5 9.1z" fill="none" stroke="#e8e8e8" stroke-width="1"/></svg>
<svg class="r" style="left:18px;top:870px;" width="14" height="14" viewBox="0 0 14 14"><path d="M4 0.5H12.5V8" fill="none" stroke="#d0d0d0" stroke-width="1"/><path d="M2 2.5H10.5V9.7" fill="none" stroke="#d0d0d0" stroke-width="1"/><rect x="1" y="5" width="7" height="7" fill="none" stroke="#d6d6d6" stroke-width="2"/></svg>
<span class="t" style="left:39.3px;top:870px;color:#f1f1f1;letter-spacing:-0.258px;">System.Runtime.Serialization.Formatters.Soap (2.0.0.0)</span>
<svg class="r" style="left:6.0px;top:887.9px;" width="7" height="10" viewBox="0 0 7 10"><path d="M0.5 0.9L4.8 5L0.5 9.1z" fill="none" stroke="#e8e8e8" stroke-width="1"/></svg>
<svg class="r" style="left:18px;top:887px;" width="14" height="14" viewBox="0 0 14 14"><path d="M4 0.5H12.5V8" fill="none" stroke="#d0d0d0" stroke-width="1"/><path d="M2 2.5H10.5V9.7" fill="none" stroke="#d0d0d0" stroke-width="1"/><rect x="1" y="5" width="7" height="7" fill="none" stroke="#d6d6d6" stroke-width="2"/></svg>
<span class="t" style="left:39.3px;top:887px;color:#f1f1f1;letter-spacing:-0.230px;">System.Deployment (2.0.0.0)</span>
</div>
<!-- editor -->
<div class="r" style="left:259px;top:59px;width:61px;height:21px;background:#3f3f46;"></div>
<span class="t" style="left:263.3px;top:62px;color:#f1f1f1;letter-spacing:-0.831px;">Class1</span>
<svg class="r" style="left:305px;top:65.5px;" width="10" height="9" viewBox="0 0 10 9"><path d="M0.6 0.8L9 8.2M9 0.8L0.6 8.2" stroke="#7a7a80" stroke-width="1.3"/></svg>
<div class="r" style="left:259px;top:80px;width:1194px;height:2px;background:#3f3f46;"></div>
<div class="r" style="left:259px;top:82px;width:1177px;height:585px;background:#1e1e1e;"></div>
<div class="r" style="left:259px;top:82px;width:17px;height:585px;background:#333333;"></div>
<div class="r" style="left:1436px;top:82px;width:17px;height:585px;background:#3e3e42;"></div>
<svg class="r" style="left:1440px;top:88px;" width="9" height="6" viewBox="0 0 9 6"><path d="M4.5 0.3L9 5.5H0z" fill="#999"/></svg>
<svg class="r" style="left:1440px;top:655.5px;" width="9" height="6" viewBox="0 0 9 6"><path d="M4.5 5.7L9 0.5H0z" fill="#999"/></svg>
<div class="r" style="left:1440px;top:99.2px;width:9px;height:97.5px;background:#686868;"></div>
<div class="r" style="left:259px;top:667px;width:1194px;height:17px;background:#3e3e42;"></div>
<div class="r" style="left:259.5px;top:667.5px;width:59px;height:16px;background:#222224;box-sizing:border-box;border:1px solid #3f3f46;"></div>
<div class="r" style="left:306px;top:668px;width:1px;height:15px;background:#3f3f46;"></div>
<span class="t" style="left:264.5px;top:668px;color:#f1f1f1;letter-spacing:-0.506px;">100 %</span>
<svg class="r" style="left:310px;top:675px;" width="6" height="4" viewBox="0 0 6 4"><path d="M0 0h6L3 3.6z" fill="#d0d0d0"/></svg>
<svg class="r" style="left:324.5px;top:671.5px;" width="6" height="9" viewBox="0 0 6 9"><path d="M0.3 4.5L5.7 0v9z" fill="#555558"/></svg>
<svg class="r" style="left:1425px;top:671.5px;" width="6" height="9" viewBox="0 0 6 9"><path d="M5.7 4.5L0.3 0v9z" fill="#555558"/></svg>
<div class="c" style="left:259px;top:82px;width:1177px;height:585px;">
<div class="r" style="left:69px;top:63px;width:1108px;height:1px;background:#a0a0a0;"></div>
<div class="r" style="left:155px;top:196px;width:126.5px;height:15.5px;background:#8f2f33;"></div>
<div class="r" style="left:69px;top:212px;width:1108px;height:16px;background:transparent;box-sizing:border-box;border:2px solid #464646;"></div>
<div class="r" style="left:155px;top:214px;width:723px;height:13px;background:#c8c866;"></div>
<div class="r" style="left:155px;top:214px;width:77px;height:13px;background:#41729f;"></div>
<div class="r" style="left:74.0px;top:106.0px;width:1px;height:494.0px;background:repeating-linear-gradient(to bottom,#7c7c7c 0,#7c7c7c 3px,transparent 3px,transparent 6px);background-position:0 -1.0px;background-size:1px 6px;"></div>
<div class="r" style="left:102.0px;top:151.0px;width:1px;height:449.0px;background:repeating-linear-gradient(to bottom,#1f7f68 0,#1f7f68 3px,transparent 3px,transparent 6px);background-position:0 -4.0px;background-size:1px 6px;"></div>
<div class="r" style="left:130.0px;top:196.0px;width:1px;height:404.0px;background:repeating-linear-gradient(to bottom,#1f5a8c 0,#1f5a8c 3px,transparent 3px,transparent 6px);background-position:0 -1.0px;background-size:1px 6px;"></div>
<div class="r" style="left:158.0px;top:273.0px;width:1px;height:16.0px;background:repeating-linear-gradient(to bottom,#b05a50 0,#b05a50 3px,transparent 3px,transparent 6px);background-position:0 -0.0px;background-size:1px 6px;"></div>
<div class="r" style="left:158.0px;top:331.0px;width:1px;height:269.0px;background:repeating-linear-gradient(to bottom,#b05a50 0,#b05a50 3px,transparent 3px,transparent 6px);background-position:0 -4.0px;background-size:1px 6px;"></div>
<div class="r" style="left:186.0px;top:376.0px;width:1px;height:186.0px;background:repeating-linear-gradient(to bottom,#9940c0 0,#9940c0 3px,transparent 3px,transparent 6px);background-position:0 -1.0px;background-size:1px 6px;"></div>
<svg class="r" style="left:1.5px;top:197.5px;" width="13" height="13" viewBox="0 0 13 13"><circle cx="6.55" cy="6.55" r="6.25" fill="#ff4f3e"/></svg>
<svg class="r" style="left:2.5px;top:214.5px;" width="12.5" height="11" viewBox="0 0 12.5 11"><path d="M0.6 3.1H5V0.6L11.7 5.5L5 10.4V7.9H0.6z" fill="#ffd21f" stroke="#e4e4e4" stroke-width="0.8"/></svg>
<span class="m" style="left:45.00px;top:1px;color:#2b91af;">1</span>
<span class="m" style="left:71.00px;top:1px;color:#569cd6;">using</span>
<span class="m" style="left:113.00px;top:1px;color:#ffd700;">System</span>
<span class="m" style="left:155.00px;top:1px;color:#dcdcdc;">;</span>
<span class="m" style="left:45.00px;top:17px;color:#2b91af;">2</span>
<span class="m" style="left:71.00px;top:17px;color:#569cd6;">using</span>
<span class="m" style="left:113.00px;top:17px;color:#ffd700;">System</span>
<span class="m" style="left:155.00px;top:17px;color:#b4b4b4;">.</span>
<span class="m" style="left:162.00px;top:17px;color:#ffd700;">IO</span>
<span class="m" style="left:176.00px;top:17px;color:#dcdcdc;">;</span>
<span class="m" style="left:45.00px;top:33px;color:#2b91af;">3</span>
<span class="m" style="left:71.00px;top:33px;color:#569cd6;">using</span>
<span class="m" style="left:113.00px;top:33px;color:#ffd700;">System</span>
<span class="m" style="left:155.00px;top:33px;color:#b4b4b4;">.</span>
<span class="m" style="left:162.00px;top:33px;color:#ffd700;">Security</span>
<span class="m" style="left:218.00px;top:33px;color:#b4b4b4;">.</span>
<span class="m" style="left:225.00px;top:33px;color:#ffd700;">Cryptography</span>
<span class="m" style="left:309.00px;top:33px;color:#dcdcdc;">;</span>
<span class="m" style="left:45.00px;top:49px;color:#2b91af;">4</span>
<span class="m" style="left:71.00px;top:49px;color:#569cd6;">using</span>
<span class="mu" style="left:112.70px;top:48px;color:#ffd700;">Q</span>
<div class="r" style="left:117.6px;top:59.0px;width:1.2px;height:3.2px;background:#ffd700;"></div>
<span class="m" style="left:123.00px;top:49px;color:#dcdcdc;">;</span>
<span class="m" style="left:45.00px;top:62px;color:#2b91af;">5</span>
<span class="m" style="left:45.00px;top:78px;color:#2b91af;">6</span>
<span class="m" style="left:71.00px;top:78px;color:#569cd6;">namespace</span>
<span class="m" style="left:141.00px;top:78px;color:#ffd700;">DecData</span>
<span class="m" style="left:45.00px;top:91px;color:#2b91af;">7</span>
<span class="m" style="left:71.00px;top:91px;color:#dcdcdc;">{</span>
<span class="m" style="left:45.00px;top:107px;color:#2b91af;">8</span>
<span class="m" style="left:99.00px;top:107px;color:#57a64a;">// Token: 0x02000002 RID: 2</span>
<span class="m" style="left:45.00px;top:123px;color:#2b91af;">9</span>
<span class="m" style="left:99.00px;top:123px;color:#569cd6;">public</span>
<span class="m" style="left:148.00px;top:123px;color:#569cd6;">class</span>
<span class="m" style="left:190.00px;top:123px;color:#4ec9b0;">Class1</span>
<span class="m" style="left:38.00px;top:136px;color:#2b91af;">10</span>
<span class="m" style="left:99.00px;top:136px;color:#dcdcdc;">{</span>
<span class="m" style="left:38.00px;top:152px;color:#2b91af;">11</span>
<span class="m" style="left:127.00px;top:152px;color:#57a64a;">// Token: 0x06000002 RID: 2 RVA: 0x00002088 File Offset: 0x00000288</span>
<span class="m" style="left:38.00px;top:168px;color:#2b91af;">12</span>
<span class="m" style="left:127.00px;top:168px;color:#569cd6;">public</span>
<span class="m" style="left:176.00px;top:168px;color:#569cd6;">static</span>
<span class="m" style="left:225.00px;top:168px;color:#569cd6;">byte</span>
<span class="m" style="left:253.00px;top:168px;color:#dcdcdc;">[]</span>
<span class="m" style="left:274.00px;top:168px;color:#ff8000;">Decrypt</span>
<span class="m" style="left:323.00px;top:168px;color:#dcdcdc;">(</span>
<span class="m" style="left:330.00px;top:168px;color:#569cd6;">byte</span>
<span class="m" style="left:358.00px;top:168px;color:#dcdcdc;">[]</span>
<span class="m" style="left:379.00px;top:168px;color:#dcdcdc;font-weight:bold;">data</span>
<span class="m" style="left:407.00px;top:168px;color:#dcdcdc;">)</span>
<span class="m" style="left:38.00px;top:181px;color:#2b91af;">13</span>
<span class="m" style="left:127.00px;top:181px;color:#dcdcdc;">{</span>
<span class="m" style="left:38.00px;top:197px;color:#2b91af;">14</span>
<span class="m" style="left:155.00px;top:197px;color:#ffffff;">char[] </span>
<span class="m" style="left:204.00px;top:197px;color:#ffffff;font-style:italic;">ɰ</span>
<span class="m" style="left:215.50px;top:197px;color:#ffffff;"> = </span>
<span class="mu" style="left:236.20px;top:196px;color:#ffffff;">Q</span>
<span class="mu" style="left:246.20px;top:196px;color:#ffffff;">Q</span>
<span class="m" style="left:256.50px;top:197px;color:#ffffff;">.</span>
<span class="mu" style="left:263.20px;top:196px;color:#ffffff;">Q</span>
<div class="r" style="left:268.1px;top:207.0px;width:1.2px;height:3.2px;background:#ffffff;"></div>
<span class="m" style="left:273.50px;top:197px;color:#ffffff;">;</span>
<span class="m" style="left:38.00px;top:213px;color:#2b91af;">15</span>
<span class="m" style="left:155.00px;top:213px;color:#1e1e1e;">IDisposable</span>
<span class="m" style="left:232.00px;top:213px;color:#1e1e1e;"> disposable = global::Ч.</span>
<span class="m" style="left:400.00px;top:213px;color:#1e1e1e;">ل</span>
<span class="m" style="left:411.50px;top:213px;color:#1e1e1e;">&lt;SymmetricAlgorithm&gt;(Class1.Ō, Class1.</span>
<span class="m" style="left:677.50px;top:213px;color:#1e1e1e;">Ղ</span>
<span class="m" style="left:686.60px;top:213px;color:#1e1e1e;">, Class1.</span>
<span class="m" style="left:749.60px;top:213px;color:#1e1e1e;">Ղ</span>
<span class="m" style="left:758.70px;top:213px;color:#1e1e1e;">, '\u0093', 'é');</span>
<span class="m" style="left:38.00px;top:229px;color:#2b91af;">16</span>
<span class="m" style="left:155.00px;top:229px;color:#4ec9b0;">Array</span>
<span class="m" style="left:197.00px;top:229px;color:#dcdcdc;">array</span>
<span class="m" style="left:232.00px;top:229px;color:#dcdcdc;">;</span>
<span class="m" style="left:38.00px;top:245px;color:#2b91af;">17</span>
<span class="m" style="left:155.00px;top:245px;color:#569cd6;">try</span>
<span class="m" style="left:38.00px;top:258px;color:#2b91af;">18</span>
<span class="m" style="left:155.00px;top:258px;color:#dcdcdc;">{</span>
<span class="m" style="left:38.00px;top:274px;color:#2b91af;">19</span>
<span class="m" style="left:183.00px;top:274px;color:#dcdcdc;">array</span>
<span class="m" style="left:225.00px;top:274px;color:#b4b4b4;">=</span>
<span class="m" style="left:239.00px;top:274px;color:#4ec9b0;">Class1</span>
<span class="m" style="left:281.00px;top:274px;color:#b4b4b4;">.</span>
<span class="m" style="left:288.00px;top:274px;color:#ff8000;">Ч</span>
<span class="m" style="left:295.00px;top:274px;color:#dcdcdc;">(</span>
<span class="m" style="left:302.00px;top:274px;color:#dcdcdc;">disposable</span>
<span class="m" style="left:379.00px;top:274px;color:#569cd6;">as</span>
<span class="m" style="left:400.00px;top:274px;color:#9b9b82;">ICryptoTransform</span>
<span class="m" style="left:512.00px;top:274px;color:#dcdcdc;">,</span>
<span class="m" style="left:526.00px;top:274px;color:#dcdcdc;font-weight:bold;">data</span>
<span class="m" style="left:554.00px;top:274px;color:#dcdcdc;">)</span>
<span class="m" style="left:561.00px;top:274px;color:#dcdcdc;">;</span>
<span class="m" style="left:38.00px;top:287px;color:#2b91af;">20</span>
<span class="m" style="left:155.00px;top:287px;color:#dcdcdc;">}</span>
<span class="m" style="left:38.00px;top:303px;color:#2b91af;">21</span>
<span class="m" style="left:155.00px;top:303px;color:#569cd6;">finally</span>
<span class="m" style="left:38.00px;top:316px;color:#2b91af;">22</span>
<span class="m" style="left:155.00px;top:316px;color:#dcdcdc;">{</span>
<span class="m" style="left:38.00px;top:332px;color:#2b91af;">23</span>
<span class="m" style="left:183.00px;top:332px;color:#569cd6;">int</span>
<span class="m" style="left:211.00px;top:332px;color:#dcdcdc;">num</span>
<span class="m" style="left:239.00px;top:332px;color:#b4b4b4;">=</span>
<span class="m" style="left:253.00px;top:332px;color:#b5cea8;">5</span>
<span class="m" style="left:260.00px;top:332px;color:#dcdcdc;">;</span>
<span class="m" style="left:38.00px;top:348px;color:#2b91af;">24</span>
<span class="m" style="left:183.00px;top:348px;color:#569cd6;">for</span>
<span class="m" style="left:211.00px;top:348px;color:#dcdcdc;">(;;)</span>
<span class="m" style="left:38.00px;top:361px;color:#2b91af;">25</span>
<span class="m" style="left:183.00px;top:361px;color:#dcdcdc;">{</span>
<span class="m" style="left:38.00px;top:377px;color:#2b91af;">26</span>
<span class="m" style="left:211.00px;top:377px;color:#569cd6;">switch</span>
<span class="m" style="left:260.00px;top:377px;color:#dcdcdc;">(</span>
<span class="m" style="left:267.00px;top:377px;color:#dcdcdc;">num</span>
<span class="m" style="left:288.00px;top:377px;color:#dcdcdc;">)</span>
<span class="m" style="left:38.00px;top:390px;color:#2b91af;">27</span>
<span class="m" style="left:211.00px;top:390px;color:#dcdcdc;">{</span>
<span class="m" style="left:38.00px;top:406px;color:#2b91af;">28</span>
<span class="m" style="left:211.00px;top:406px;color:#569cd6;">case</span>
<span class="m" style="left:246.00px;top:406px;color:#b5cea8;">0</span>
<span class="m" style="left:253.00px;top:406px;color:#dcdcdc;">:</span>
<span class="m" style="left:38.00px;top:422px;color:#2b91af;">29</span>
<span class="m" style="left:211.00px;top:422px;color:#569cd6;">case</span>
<span class="m" style="left:246.00px;top:422px;color:#b5cea8;">1</span>
<span class="m" style="left:253.00px;top:422px;color:#dcdcdc;">:</span>
<span class="m" style="left:38.00px;top:438px;color:#2b91af;">30</span>
<span class="m" style="left:211.00px;top:438px;color:#569cd6;">case</span>
<span class="m" style="left:246.00px;top:438px;color:#b5cea8;">3</span>
<span class="m" style="left:253.00px;top:438px;color:#dcdcdc;">:</span>
<span class="m" style="left:38.00px;top:454px;color:#2b91af;">31</span>
<span class="m" style="left:239.00px;top:454px;color:#569cd6;">goto</span>
<span class="m" style="left:274.00px;top:454px;color:#9b9b82;">IL_A5</span>
<span class="m" style="left:309.00px;top:454px;color:#dcdcdc;">;</span>
<span class="m" style="left:38.00px;top:470px;color:#2b91af;">32</span>
<span class="m" style="left:211.00px;top:470px;color:#569cd6;">default</span>
<span class="m" style="left:260.00px;top:470px;color:#dcdcdc;">:</span>
<span class="m" style="left:38.00px;top:486px;color:#2b91af;">33</span>
<span class="m" style="left:239.00px;top:486px;color:#dcdcdc;">num</span>
<span class="m" style="left:267.00px;top:486px;color:#b4b4b4;">=</span>
<span class="m" style="left:281.00px;top:486px;color:#dcdcdc;">(</span>
<span class="m" style="left:288.00px;top:486px;color:#569cd6;">int</span>
<span class="m" style="left:309.00px;top:486px;color:#dcdcdc;">)((</span>
<span class="m" style="left:330.00px;top:486px;color:#b4b4b4;">!</span>
<span class="m" style="left:337.00px;top:486px;color:#dcdcdc;">(</span>
<span class="m" style="left:344.00px;top:486px;color:#dcdcdc;">disposable</span>
<span class="m" style="left:421.00px;top:486px;color:#569cd6;">is</span>
<span class="m" style="left:442.00px;top:486px;color:#9b9b82;">ICryptoTransform</span>
<span class="m" style="left:554.00px;top:486px;color:#dcdcdc;">))</span>
<span class="m" style="left:575.00px;top:486px;color:#b4b4b4;">?</span>
<span class="m" style="left:589.00px;top:486px;color:#dcdcdc;">(</span>
<span class="m" style="left:596.00px;top:486px;color:#dcdcdc;font-style:italic;">ɰ</span>
<span class="m" style="left:605.50px;top:486px;color:#dcdcdc;">[</span>
<span class="m" style="left:612.50px;top:486px;color:#b5cea8;">212</span>
<span class="m" style="left:633.50px;top:486px;color:#dcdcdc;">]</span>
<span class="m" style="left:647.50px;top:486px;color:#b4b4b4;">-</span>
<span class="m" style="left:661.50px;top:486px;color:#d69d85;">'</span>
<span class="m" style="left:668.50px;top:486px;color:#d69d85;font-size:12.5px;">呓</span>
<span class="m" style="left:682.70px;top:486px;color:#d69d85;">'</span>
<span class="m" style="left:689.70px;top:486px;color:#dcdcdc;">)</span>
<span class="m" style="left:703.70px;top:486px;color:#b4b4b4;">:</span>
<span class="m" style="left:717.70px;top:486px;color:#d69d85;">'\u0004'</span>
<span class="m" style="left:773.70px;top:486px;color:#dcdcdc;">)</span>
<span class="m" style="left:780.70px;top:486px;color:#dcdcdc;">;</span>
<span class="m" style="left:38.00px;top:502px;color:#2b91af;">34</span>
<span class="m" style="left:239.00px;top:502px;color:#569cd6;">break</span>
<span class="m" style="left:274.00px;top:502px;color:#dcdcdc;">;</span>
<span class="m" style="left:38.00px;top:518px;color:#2b91af;">35</span>
<span class="m" style="left:211.00px;top:518px;color:#569cd6;">case</span>
<span class="m" style="left:246.00px;top:518px;color:#b5cea8;">4</span>
<span class="m" style="left:253.00px;top:518px;color:#dcdcdc;">:</span>
<span class="m" style="left:38.00px;top:534px;color:#2b91af;">36</span>
<span class="m" style="left:239.00px;top:534px;color:#569cd6;">goto</span>
<span class="m" style="left:274.00px;top:534px;color:#9b9b82;">IL_9A</span>
<span class="m" style="left:309.00px;top:534px;color:#dcdcdc;">;</span>
<span class="m" style="left:38.00px;top:547px;color:#2b91af;">37</span>
<span class="m" style="left:211.00px;top:547px;color:#dcdcdc;">}</span>
<span class="m" style="left:38.00px;top:560px;color:#2b91af;">38</span>
<span class="m" style="left:183.00px;top:560px;color:#dcdcdc;">}</span>
<span class="m" style="left:38.00px;top:576px;color:#2b91af;">39</span>
<span class="m" style="left:183.00px;top:576px;color:#9b9b82;">IL_9A</span>
<span class="m" style="left:218.00px;top:576px;color:#dcdcdc;">:</span>
</div>
<!-- localsp -->
<div class="r" style="left:259px;top:691px;width:1194px;height:319px;background:#2d2d30;box-sizing:border-box;border:1px solid #3f3f46;"></div>
<div class="r" style="left:260px;top:691px;width:1192px;height:21px;background:#007acc;"></div>
<span class="t" style="left:264.3px;top:694px;color:#ffffff;letter-spacing:-0.331px;">Locals</span>
<svg class="r" style="left:308px;top:699px" width="1105" height="5"><defs><pattern id="gp2" width="4" height="4" patternUnits="userSpaceOnUse"><rect x="0" y="0" width="1" height="1" fill="#6cb8ec"/><rect x="2" y="2" width="1" height="1" fill="#6cb8ec"/></pattern></defs><rect width="1105" height="5" fill="url(#gp2)"/></svg>
<svg class="r" style="left:1421px;top:698.8px;" width="8" height="5" viewBox="0 0 8 5"><path d="M0 0h8L4 4.4z" fill="#fff"/></svg>
<svg class="r" style="left:1436px;top:696.5px;" width="10" height="9" viewBox="0 0 10 9"><path d="M0.8 0.6L9.2 8.4M9.2 0.6L0.8 8.4" stroke="#fff" stroke-width="1.7"/></svg>
<div class="r" style="left:260px;top:712px;width:1175px;height:277px;background:#252526;"></div>
<div class="r" style="left:1435px;top:712px;width:17px;height:277px;background:#3e3e42;"></div>
<svg class="r" style="left:1439px;top:718px;" width="9" height="6" viewBox="0 0 9 6"><path d="M4.5 0.3L9 5.5H0z" fill="#999"/></svg>
<svg class="r" style="left:1439px;top:976.5px;" width="9" height="6" viewBox="0 0 9 6"><path d="M4.5 5.7L9 0.5H0z" fill="#999"/></svg>
<div class="r" style="left:1439px;top:730px;width:9px;height:13px;background:#686868;"></div>
<div class="r" style="left:262px;top:731px;width:1171px;height:1px;background:#3f3f46;"></div>
<div class="r" style="left:660px;top:712px;width:1px;height:19px;background:#3f3f46;"></div>
<div class="r" style="left:1117px;top:712px;width:1px;height:19px;background:#3f3f46;"></div>
<div class="r" style="left:1318px;top:712px;width:1px;height:19px;background:#3f3f46;"></div>
<span class="t" style="left:268.3px;top:714px;color:#f1f1f1;letter-spacing:-0.004px;">Name</span>
<span class="t" style="left:667.5px;top:714px;color:#f1f1f1;letter-spacing:-0.263px;">Value</span>
<span class="t" style="left:1125.5px;top:714px;color:#f1f1f1;letter-spacing:-0.379px;">Type</span>
<div class="c" style="left:260px;top:732px;width:1175px;height:257px;">
<div class="r" style="left:0px;top:54px;width:1175px;height:17.5px;background:#424245;"></div>
<div class="r" style="left:0px;top:17px;width:1058px;height:1px;background:#0b0b0b;"></div>
<div class="r" style="left:0px;top:35px;width:1058px;height:1px;background:#0b0b0b;"></div>
<div class="r" style="left:0px;top:53px;width:1058px;height:1px;background:#0b0b0b;"></div>
<div class="r" style="left:0px;top:71px;width:1058px;height:1px;background:#0b0b0b;"></div>
<div class="r" style="left:0px;top:89px;width:1058px;height:1px;background:#0b0b0b;"></div>
<div class="r" style="left:0px;top:107px;width:1058px;height:1px;background:#0b0b0b;"></div>
<div class="r" style="left:0px;top:125px;width:1058px;height:1px;background:#0b0b0b;"></div>
<div class="r" style="left:0px;top:143px;width:1058px;height:1px;background:#0b0b0b;"></div>
<div class="r" style="left:0px;top:161px;width:1058px;height:1px;background:#0b0b0b;"></div>
<div class="r" style="left:0px;top:179px;width:1058px;height:1px;background:#0b0b0b;"></div>
<div class="r" style="left:0px;top:197px;width:1058px;height:1px;background:#0b0b0b;"></div>
<div class="r" style="left:0px;top:215px;width:1058px;height:1px;background:#0b0b0b;"></div>
<div class="r" style="left:0px;top:233px;width:1058px;height:1px;background:#0b0b0b;"></div>
<div class="r" style="left:0px;top:251px;width:1058px;height:1px;background:#0b0b0b;"></div>
<div class="r" style="left:0px;top:269px;width:1058px;height:1px;background:#0b0b0b;"></div>
<div class="r" style="left:400.5px;top:0px;width:1px;height:257px;background:#0b0b0b;"></div>
<div class="r" style="left:857.5px;top:0px;width:1px;height:257px;background:#0b0b0b;"></div>
<div class="r" style="left:1058px;top:0px;width:1px;height:257px;background:#0b0b0b;"></div>
<svg class="r" style="left:20.80000000000001px;top:2.8px;" width="10.5" height="9.5" viewBox="0 0 10.5 9.5"><path d="M0 3.6L5.8 0L10.4 2.1V6L4.2 9.4L0 6.7z" fill="#75beff"/><path d="M3.3 3.3L6 1.9" stroke="#252526" stroke-width="1.2"/></svg>
<span class="t" style="left:41.3px;top:0px;color:#f1f1f1;letter-spacing:-0.070px;">disposable</span>
<span class="t" style="left:406.0px;top:0px;color:#569cd6;letter-spacing:0.388px;">null</span>
<span class="t" style="left:861.5px;top:0px;color:#ffd700;letter-spacing:-0.429px;">System</span>
<span class="t" style="left:898.9px;top:0px;color:#dcdcdc;letter-spacing:-0.308px;">.</span>
<span class="t" style="left:902.0px;top:0px;color:#9b9b82;letter-spacing:-0.180px;">IDisposable</span>
<svg class="r" style="left:20.80000000000001px;top:20.8px;" width="10.5" height="9.5" viewBox="0 0 10.5 9.5"><path d="M0 3.6L5.8 0L10.4 2.1V6L4.2 9.4L0 6.7z" fill="#75beff"/><path d="M3.3 3.3L6 1.9" stroke="#252526" stroke-width="1.2"/></svg>
<span class="t" style="left:41.3px;top:18px;color:#f1f1f1;letter-spacing:-0.206px;">array</span>
<span class="t" style="left:406.0px;top:18px;color:#569cd6;letter-spacing:0.388px;">null</span>
<span class="t" style="left:861.5px;top:18px;color:#ffd700;letter-spacing:-0.429px;">System</span>
<span class="t" style="left:898.9px;top:18px;color:#dcdcdc;letter-spacing:-0.308px;">.</span>
<span class="t" style="left:902.0px;top:18px;color:#4ec9b0;letter-spacing:-0.067px;">Array</span>
<svg class="r" style="left:20.80000000000001px;top:38.8px;" width="10.5" height="9.5" viewBox="0 0 10.5 9.5"><path d="M0 3.6L5.8 0L10.4 2.1V6L4.2 9.4L0 6.7z" fill="#75beff"/><path d="M3.3 3.3L6 1.9" stroke="#252526" stroke-width="1.2"/></svg>
<span class="t" style="left:41.3px;top:36px;color:#f1f1f1;letter-spacing:0.315px;">num</span>
<span class="t" style="left:406.0px;top:36px;color:#b5cea8;letter-spacing:-0.536px;">0x00000000</span>
<span class="t" style="left:861.5px;top:36px;color:#569cd6;letter-spacing:0.493px;">int</span>
<svg class="r" style="left:20.80000000000001px;top:56.8px;" width="10.5" height="9.5" viewBox="0 0 10.5 9.5"><path d="M0 3.6L5.8 0L10.4 2.1V6L4.2 9.4L0 6.7z" fill="#75beff"/><path d="M3.3 3.3L6 1.9" stroke="#252526" stroke-width="1.2"/></svg>
<span class="t" style="left:41.3px;top:54px;color:#f1f1f1;font-style:italic;">ɰ</span>
<svg class="r" style="left:6px;top:59.0px;" width="8" height="8" viewBox="0 0 8 8"><path d="M7.7 0.3V7.7H0.3z" fill="#f1f1f1"/></svg>
<div class="r" style="left:406px;top:54.0px;width:99px;height:14.5px;background:#703a06;"></div>
<span class="t" style="left:406.0px;top:54px;color:#e51400;letter-spacing:0.032px;">{</span>
<span class="t" style="left:410.0px;top:54px;color:#7ca6dc;letter-spacing:-0.017px;">char</span>
<span class="t" style="left:433.3px;top:54px;color:#f1f1f1;letter-spacing:0.704px;">[</span>
<span class="t" style="left:437.4px;top:54px;color:#d8d8a0;letter-spacing:-0.536px;">0x00000106</span>
<span class="t" style="left:498.1px;top:54px;color:#f1f1f1;letter-spacing:0.704px;">]</span>
<span class="t" style="left:502.1px;top:54px;color:#e51400;letter-spacing:0.032px;">}</span>
<span class="t" style="left:861.5px;top:54px;color:#569cd6;letter-spacing:-0.017px;">char</span>
<span class="t" style="left:884.8px;top:54px;color:#dcdcdc;letter-spacing:0.712px;">[]</span>
<svg class="r" style="left:40.0px;top:74.8px;" width="10.5" height="9.5" viewBox="0 0 10.5 9.5"><path d="M0 3.6L5.8 0L10.4 2.1V6L4.2 9.4L0 6.7z" fill="#75beff"/><path d="M3.3 3.3L6 1.9" stroke="#252526" stroke-width="1.2"/></svg>
<span class="t" style="left:60.5px;top:72px;color:#f1f1f1;letter-spacing:0.275px;">[0]</span>
<span class="t" style="left:406.0px;top:72px;color:#b5cea8;letter-spacing:-0.603px;">0x1C43 </span>
<span class="t" style="left:446.5px;top:72px;color:#d69d85;">'</span>
<div class="r" style="left:450.38000000000005px;top:74.5px;width:6.5px;height:10px;background:transparent;box-sizing:border-box;border:1px solid #d69d85;"></div>
<span class="t" style="left:458.4px;top:72px;color:#d69d85;">'</span>
<span class="t" style="left:861.5px;top:72px;color:#569cd6;letter-spacing:-0.017px;">char</span>
<svg class="r" style="left:40.0px;top:92.8px;" width="10.5" height="9.5" viewBox="0 0 10.5 9.5"><path d="M0 3.6L5.8 0L10.4 2.1V6L4.2 9.4L0 6.7z" fill="#75beff"/><path d="M3.3 3.3L6 1.9" stroke="#252526" stroke-width="1.2"/></svg>
<span class="t" style="left:60.5px;top:90px;color:#f1f1f1;letter-spacing:0.275px;">[1]</span>
<span class="t" style="left:406.0px;top:90px;color:#b5cea8;letter-spacing:-0.459px;">0x2D05 </span>
<span class="t" style="left:447.5px;top:90px;color:#d69d85;">'</span>
<span class="t" style="left:451.1px;top:90px;color:#d69d85;font-size:11px;">ⴅ</span>
<span class="t" style="left:462.3px;top:90px;color:#d69d85;">'</span>
<span class="t" style="left:861.5px;top:90px;color:#569cd6;letter-spacing:-0.017px;">char</span>
<svg class="r" style="left:40.0px;top:110.8px;" width="10.5" height="9.5" viewBox="0 0 10.5 9.5"><path d="M0 3.6L5.8 0L10.4 2.1V6L4.2 9.4L0 6.7z" fill="#75beff"/><path d="M3.3 3.3L6 1.9" stroke="#252526" stroke-width="1.2"/></svg>
<span class="t" style="left:60.5px;top:108px;color:#f1f1f1;letter-spacing:0.275px;">[2]</span>
<span class="t" style="left:406.0px;top:108px;color:#b5cea8;letter-spacing:-0.459px;">0x209D </span>
<span class="t" style="left:447.5px;top:108px;color:#d69d85;">'</span>
<div class="r" style="left:451.39200000000005px;top:110.5px;width:6.5px;height:10px;background:transparent;box-sizing:border-box;border:1px solid #d69d85;"></div>
<span class="t" style="left:459.4px;top:108px;color:#d69d85;">'</span>
<span class="t" style="left:861.5px;top:108px;color:#569cd6;letter-spacing:-0.017px;">char</span>
<svg class="r" style="left:40.0px;top:128.8px;" width="10.5" height="9.5" viewBox="0 0 10.5 9.5"><path d="M0 3.6L5.8 0L10.4 2.1V6L4.2 9.4L0 6.7z" fill="#75beff"/><path d="M3.3 3.3L6 1.9" stroke="#252526" stroke-width="1.2"/></svg>
<span class="t" style="left:60.5px;top:126px;color:#f1f1f1;letter-spacing:0.275px;">[3]</span>
<span class="t" style="left:406.0px;top:126px;color:#b5cea8;letter-spacing:-0.510px;">0x51B6 </span>
<span class="t" style="left:446.5px;top:126px;color:#d69d85;">'</span>
<span class="t" style="left:450.1px;top:126px;color:#d69d85;">冶</span>
<span class="t" style="left:462.8px;top:126px;color:#d69d85;">'</span>
<span class="t" style="left:861.5px;top:126px;color:#569cd6;letter-spacing:-0.017px;">char</span>
<svg class="r" style="left:40.0px;top:146.8px;" width="10.5" height="9.5" viewBox="0 0 10.5 9.5"><path d="M0 3.6L5.8 0L10.4 2.1V6L4.2 9.4L0 6.7z" fill="#75beff"/><path d="M3.3 3.3L6 1.9" stroke="#252526" stroke-width="1.2"/></svg>
<span class="t" style="left:60.5px;top:144px;color:#f1f1f1;letter-spacing:0.275px;">[4]</span>
<span class="t" style="left:406.0px;top:144px;color:#b5cea8;letter-spacing:-0.504px;">0x7A1C </span>
<span class="t" style="left:448.5px;top:144px;color:#d69d85;">'</span>
<span class="t" style="left:452.1px;top:144px;color:#d69d85;">稜</span>
<span class="t" style="left:464.8px;top:144px;color:#d69d85;">'</span>
<span class="t" style="left:861.5px;top:144px;color:#569cd6;letter-spacing:-0.017px;">char</span>
<svg class="r" style="left:40.0px;top:164.8px;" width="10.5" height="9.5" viewBox="0 0 10.5 9.5"><path d="M0 3.6L5.8 0L10.4 2.1V6L4.2 9.4L0 6.7z" fill="#75beff"/><path d="M3.3 3.3L6 1.9" stroke="#252526" stroke-width="1.2"/></svg>
<span class="t" style="left:60.5px;top:162px;color:#f1f1f1;letter-spacing:0.275px;">[5]</span>
<span class="t" style="left:406.0px;top:162px;color:#b5cea8;letter-spacing:-0.363px;">0x9FA5 </span>
<span class="t" style="left:447.5px;top:162px;color:#d69d85;">'</span>
<span class="t" style="left:451.1px;top:162px;color:#d69d85;">龥</span>
<span class="t" style="left:463.8px;top:162px;color:#d69d85;">'</span>
<span class="t" style="left:861.5px;top:162px;color:#569cd6;letter-spacing:-0.017px;">char</span>
<svg class="r" style="left:40.0px;top:182.8px;" width="10.5" height="9.5" viewBox="0 0 10.5 9.5"><path d="M0 3.6L5.8 0L10.4 2.1V6L4.2 9.4L0 6.7z" fill="#75beff"/><path d="M3.3 3.3L6 1.9" stroke="#252526" stroke-width="1.2"/></svg>
<span class="t" style="left:60.5px;top:180px;color:#f1f1f1;letter-spacing:0.275px;">[6]</span>
<span class="t" style="left:406.0px;top:180px;color:#b5cea8;letter-spacing:-0.556px;">0x06F7 </span>
<span class="t" style="left:445.5px;top:180px;color:#d69d85;">'</span>
<span class="t" style="left:449.1px;top:180px;color:#d69d85;font-size:11px;">۷</span>
<span class="t" style="left:455.3px;top:180px;color:#d69d85;">'</span>
<span class="t" style="left:861.5px;top:180px;color:#569cd6;letter-spacing:-0.017px;">char</span>
<svg class="r" style="left:40.0px;top:200.8px;" width="10.5" height="9.5" viewBox="0 0 10.5 9.5"><path d="M0 3.6L5.8 0L10.4 2.1V6L4.2 9.4L0 6.7z" fill="#75beff"/><path d="M3.3 3.3L6 1.9" stroke="#252526" stroke-width="1.2"/></svg>
<span class="t" style="left:60.5px;top:198px;color:#f1f1f1;letter-spacing:0.275px;">[7]</span>
<span class="t" style="left:406.0px;top:198px;color:#b5cea8;letter-spacing:-0.462px;">0x5861 </span>
<span class="t" style="left:445.5px;top:198px;color:#d69d85;">'</span>
<span class="t" style="left:449.1px;top:198px;color:#d69d85;">塡</span>
<span class="t" style="left:461.8px;top:198px;color:#d69d85;">'</span>
<span class="t" style="left:861.5px;top:198px;color:#569cd6;letter-spacing:-0.017px;">char</span>
<svg class="r" style="left:40.0px;top:218.8px;" width="10.5" height="9.5" viewBox="0 0 10.5 9.5"><path d="M0 3.6L5.8 0L10.4 2.1V6L4.2 9.4L0 6.7z" fill="#75beff"/><path d="M3.3 3.3L6 1.9" stroke="#252526" stroke-width="1.2"/></svg>
<span class="t" style="left:60.5px;top:216px;color:#f1f1f1;letter-spacing:0.275px;">[8]</span>
<span class="t" style="left:406.0px;top:216px;color:#b5cea8;letter-spacing:-0.748px;">0x21FE </span>
<span class="t" style="left:445.5px;top:216px;color:#d69d85;">'</span>
<span class="t" style="left:449.1px;top:216px;color:#d69d85;font-size:11px;">⇾</span>
<span class="t" style="left:458.3px;top:216px;color:#d69d85;">'</span>
<span class="t" style="left:861.5px;top:216px;color:#569cd6;letter-spacing:-0.017px;">char</span>
<svg class="r" style="left:40.0px;top:236.8px;" width="10.5" height="9.5" viewBox="0 0 10.5 9.5"><path d="M0 3.6L5.8 0L10.4 2.1V6L4.2 9.4L0 6.7z" fill="#75beff"/><path d="M3.3 3.3L6 1.9" stroke="#252526" stroke-width="1.2"/></svg>
<span class="t" style="left:60.5px;top:234px;color:#f1f1f1;letter-spacing:0.275px;">[9]</span>
<span class="t" style="left:406.0px;top:234px;color:#b5cea8;letter-spacing:-0.603px;">0x878C </span>
<span class="t" style="left:446.5px;top:234px;color:#d69d85;">'</span>
<span class="t" style="left:450.1px;top:234px;color:#d69d85;">螌</span>
<span class="t" style="left:462.8px;top:234px;color:#d69d85;">'</span>
<span class="t" style="left:861.5px;top:234px;color:#569cd6;letter-spacing:-0.017px;">char</span>
<svg class="r" style="left:40.0px;top:254.8px;" width="10.5" height="9.5" viewBox="0 0 10.5 9.5"><path d="M0 3.6L5.8 0L10.4 2.1V6L4.2 9.4L0 6.7z" fill="#75beff"/><path d="M3.3 3.3L6 1.9" stroke="#252526" stroke-width="1.2"/></svg>
<span class="t" style="left:60.5px;top:252px;color:#f1f1f1;letter-spacing:0.056px;">[10]</span>
<span class="t" style="left:406.0px;top:252px;color:#b5cea8;letter-spacing:-0.556px;">0x60F0 </span>
<span class="t" style="left:445.5px;top:252px;color:#d69d85;">'</span>
<span class="t" style="left:449.1px;top:252px;color:#d69d85;">惰</span>
<span class="t" style="left:461.8px;top:252px;color:#d69d85;">'</span>
<span class="t" style="left:861.5px;top:252px;color:#569cd6;letter-spacing:-0.017px;">char</span>
</div>
<div class="r" style="left:259.5px;top:989px;width:44px;height:20.5px;background:#252526;box-sizing:border-box;border:1px solid #3f3f46;border-top:none;"></div>
<div class="r" style="left:303px;top:989px;width:1149px;height:1px;background:#3f3f46;"></div>
<span class="t" style="left:265.2px;top:991px;color:#0e9bff;letter-spacing:-0.365px;">Locals</span>
<span class="t" style="left:309.5px;top:992px;color:#f1f1f1;letter-spacing:0.020px;">Modules</span>
<span class="t" style="left:365.4px;top:992px;color:#f1f1f1;letter-spacing:-0.043px;">Memory 1</span>
<span class="t" style="left:429.1px;top:992px;color:#f1f1f1;letter-spacing:0.057px;">Memory 2</span>
<!-- explorer -->
<div class="r" style="left:1460px;top:0px;width:459px;height:1037px;background:#ffffff;"></div>
<svg class="r" style="left:1464px;top:5.2px;" width="13.3" height="15.5" viewBox="0 0 13.3 15.5"><defs><linearGradient id="fg1" x1="0" y1="0" x2="1" y2="1"><stop offset="0" stop-color="#ffeaa8"/><stop offset="1" stop-color="#ffd866"/></linearGradient></defs>
      <path d="M0.3 0.3h11.8v8.7h1.2v6.5H0.3z" fill="url(#fg1)" stroke="#f3cd5c" stroke-width="0.6"/>
      <path d="M10.4 9.1h2.5v6.0h-2.5z" fill="#ffe595" stroke="#ecbd45" stroke-width="0.7"/></svg>
<div class="r" style="left:1485.5px;top:7.5px;width:1px;height:11.5px;background:#8a8a8a;"></div>
<svg class="r" style="left:1496.5px;top:6px;" width="13" height="16" viewBox="0 0 13 16"><path d="M0.6 0.6h8.2l3.2 3.2v11.4H0.6z" fill="#fff" stroke="#7a7a7a" stroke-width="1"/><path d="M8.8 0.6v3.2h3.2" fill="none" stroke="#7a7a7a" stroke-width="0.8"/><path d="M3 8.6l2.4 2.3l4.4-5" fill="none" stroke="#f4511e" stroke-width="1.5"/></svg>
<svg class="r" style="left:1519px;top:6.2px;" width="13" height="15.3" viewBox="0 0 13 15.3"><defs><linearGradient id="fg2" x1="0" y1="0" x2="1" y2="1"><stop offset="0" stop-color="#ffeaa8"/><stop offset="1" stop-color="#ffd866"/></linearGradient></defs>
      <path d="M0.3 0.3h11.5v8.6h1.2v6.4H0.3z" fill="url(#fg2)" stroke="#f3cd5c" stroke-width="0.6"/>
      <path d="M10.1 9.0h2.5v5.9h-2.5z" fill="#ffe595" stroke="#ecbd45" stroke-width="0.7"/></svg>
<div class="r" style="left:1540px;top:12px;width:7px;height:1.2px;background:#000;"></div>
<svg class="r" style="left:1540.5px;top:14.3px;" width="6" height="4" viewBox="0 0 6 4"><path d="M0 0h6L3 3.4z" fill="#000"/></svg>
<div class="r" style="left:1555.3px;top:7.5px;width:1px;height:11.5px;background:#8a8a8a;"></div>
<span class="t" style="left:1563.5px;top:6px;color:#949494;letter-spacing:-0.147px;">Roaming</span>
<div class="r" style="left:1813px;top:13px;width:10px;height:1px;background:#999;"></div>
<div class="r" style="left:1858px;top:8px;width:10px;height:10px;background:transparent;box-sizing:border-box;border:1px solid #999;"></div>
<svg class="r" style="left:1904px;top:8px;" width="11" height="11" viewBox="0 0 11 11"><path d="M0.3 0.3L10.2 10.2M10.2 0.3L0.3 10.2" stroke="#999" stroke-width="1"/></svg>
<div class="r" style="left:1460px;top:29px;width:50px;height:23px;background:#0063b1;"></div>
<span class="t" style="left:1473.5px;top:33px;color:#ffffff;font-size:11.5px;letter-spacing:-0.183px;">File</span>
<div class="r" style="left:1460px;top:52px;width:459px;height:93px;background:#f5f6f7;"></div>
<div class="r" style="left:1460px;top:52px;width:459px;height:1px;background:#dadbdc;"></div>
<div class="r" style="left:1510px;top:29px;width:58px;height:24px;background:#f5f6f7;box-sizing:border-box;border:1px solid #dadbdc;border-bottom:none;"></div>
<span class="t" style="left:1524.4px;top:33px;color:#0a0a0a;font-size:11.5px;letter-spacing:-0.322px;">Home</span>
<span class="t" style="left:1583.1px;top:33px;color:#0a0a0a;font-size:11.5px;letter-spacing:-0.458px;">Share</span>
<span class="t" style="left:1640.9px;top:33px;color:#0a0a0a;font-size:11.5px;letter-spacing:0.095px;">View</span>
<svg class="r" style="left:1894.5px;top:37px;" width="9" height="6" viewBox="0 0 9 6"><path d="M0.4 5.4L4.5 1.2L8.6 5.4" fill="none" stroke="#8a8a8a" stroke-width="1.1"/></svg>
<svg class="r" style="left:1912px;top:31px;" width="7" height="18" viewBox="0 0 7 18"><circle cx="9.5" cy="9" r="8.6" fill="#0063b1"/></svg>
<div class="r" style="left:1460px;top:144px;width:459px;height:1px;background:#dadbdc;"></div>
<svg class="r" style="left:1482.5px;top:66px;" width="21" height="20.5" viewBox="0 0 21 20.5"><g fill="#8e9ba3"><path d="M13.2 0.3L20.5 7.6L18.6 9.5L17.3 8.9L12.6 13.6L12.3 17.3L10.2 19.4L1.5 10.7L3.6 8.6L7.3 8.3L12 3.6L11.4 2.2z"/><path d="M5.2 13.8L6.9 15.5L1.2 20.2L0.4 19.4z"/></g></svg>
<span class="t" style="left:1462.6px;top:94px;color:#0a0a0a;font-size:11.5px;letter-spacing:-0.042px;">Pin to Quick</span>
<span class="t" style="left:1477.2px;top:107px;color:#0a0a0a;font-size:11.5px;letter-spacing:-0.699px;">access</span>
<svg class="r" style="left:1536px;top:62px;" width="24" height="28" viewBox="0 0 24 28"><g fill="#e6ecf6" stroke="#bccae0" stroke-width="0.9"><path d="M0.5 0.5h11l3.6 3.6v15.6H0.5z"/><path d="M8.6 8.5h11l3.6 3.6v15.4H8.6z"/></g>
      <g stroke="#c4d0e4" stroke-width="0.8"><path d="M2.5 5h8M2.5 7.5h5M2.5 10h5M2.5 12.5h5M2.5 15h5M10.5 14h10.5M10.5 16.3h10.5M10.5 18.6h10.5M10.5 20.9h10.5M10.5 23.2h10.5M10.5 25.5h10.5"/></g></svg>
<span class="t" style="left:1534.8px;top:94px;color:#8e8e8e;font-size:11.5px;letter-spacing:-0.440px;">Copy</span>
<svg class="r" style="left:1580px;top:60.5px;" width="20" height="29.5" viewBox="0 0 20 29.5"><rect x="0.8" y="3.6" width="18.4" height="25" rx="1" fill="#9fb0cc" /><rect x="2.6" y="6.2" width="14.8" height="20.4" fill="#edf2fa"/><path d="M6 3.4h8l1 3H5z" fill="#b9c6dc"/><circle cx="10" cy="2.3" r="1.7" fill="none" stroke="#b0bed6" stroke-width="1"/>
      <g stroke="#cdd8ea" stroke-width="0.8"><path d="M3.5 10h13M3.5 12.6h13M3.5 15.2h13M3.5 17.8h13M3.5 20.4h13M3.5 23h13"/></g></svg>
<span class="t" style="left:1576.6px;top:94px;color:#8e8e8e;font-size:11.5px;letter-spacing:-0.644px;">Paste</span>
<svg class="r" style="left:1616px;top:59.5px;" width="12" height="16.5" viewBox="0 0 12 16.5"><path d="M2.2 0.5L8.2 11.2M9.8 0.5L3.8 11.2" stroke="#aab8d0" stroke-width="1.3" fill="none"/><circle cx="2.8" cy="13.2" r="2.3" fill="none" stroke="#9fb0cc" stroke-width="1.4"/><circle cx="9.2" cy="13.2" r="2.3" fill="none" stroke="#9fb0cc" stroke-width="1.4"/></svg>
<div class="r" style="left:1614px;top:86px;width:15px;height:9px;background:#dfe7f3;box-sizing:border-box;border:1px solid #cfd9ea;"></div>
<svg class="r" style="left:1616px;top:88px;" width="12" height="6" viewBox="0 0 12 6"><path d="M0.8 0.8L2.8 4.8M3.2 0.8L5.2 4.8" stroke="#8fa2c4" stroke-width="1"/><path d="M6.4 4.4h1M8.2 4.4h1M10 4.4h1" stroke="#8fa2c4" stroke-width="1"/></svg>
<svg class="r" style="left:1615px;top:104px;" width="13" height="16" viewBox="0 0 13 16"><rect x="0.8" y="2" width="11.4" height="13.4" rx="0.8" fill="#9fb0cc"/><rect x="2.4" y="4" width="8.2" height="9.6" fill="#edf2fa"/><path d="M4 1.8h5l0.6 2H3.4z" fill="#b9c6dc"/><path d="M4.4 11.4C4.6 8.6 6 7.6 8 7.6V6l2.4 2.4L8 10.8V9.3C6.6 9.3 5.4 9.8 4.4 11.4z" fill="#7d93bb"/></svg>
<span class="t" style="left:1521.5px;top:127px;color:#444;font-size:11.5px;letter-spacing:0.118px;">Clipboard</span>
<div class="r" style="left:1639px;top:55px;width:1px;height:86px;background:#e2e3e4;"></div>
<svg class="r" style="left:1649px;top:68px;" width="14" height="16" viewBox="0 0 14 16"><rect x="0.2" y="0.2" width="12" height="15.6" fill="#d9e3f2" stroke="#cbd7ea" stroke-width="0.5"/><path d="M5.4 11.4l4.2-3.6v2.2h3.6v3h-3.6v2.2z" fill="#a3b5d1"/></svg>
<svg class="r" style="left:1665px;top:74px;" width="5.5" height="3.2" viewBox="0 0 5.5 3.2"><path d="M0 0h5.4L2.7 3z" fill="#b4b4b4"/></svg>
<svg class="r" style="left:1649px;top:97px;" width="14.5" height="16" viewBox="0 0 14.5 16"><rect x="0.2" y="0.2" width="12" height="15.6" fill="#d9e3f2" stroke="#cbd7ea" stroke-width="0.5"/><path d="M4 1h6l0 9h-6z" fill="#e8eef8" stroke="#a9b9d4" stroke-width="0.8"/><path d="M6.4 3.2h6.6v9.4H6.4z" fill="#eef3fb" stroke="#a3b5d1" stroke-width="0.8"/><path d="M7.8 6h3.8M7.8 8h3.8M7.8 10h3.8" stroke="#a3b5d1" stroke-width="0.8"/></svg>
<svg class="r" style="left:1665px;top:103px;" width="5.5" height="3.2" viewBox="0 0 5.5 3.2"><path d="M0 0h5.4L2.7 3z" fill="#b4b4b4"/></svg>
<div class="r" style="left:1678.5px;top:62px;width:1px;height:55px;background:#e2e3e4;"></div>
<svg class="r" style="left:1686px;top:69px;" width="14" height="14" viewBox="0 0 14 14"><path d="M1.6 1.6L12.4 12.4M12.4 1.6L1.6 12.4" stroke="#8a9bbc" stroke-width="3.2"/></svg>
<svg class="r" style="left:1704.8px;top:74px;" width="5.6" height="3.2" viewBox="0 0 5.6 3.2"><path d="M0 0h5.6L2.8 3.2z" fill="#000"/></svg>
<svg class="r" style="left:1684.8px;top:96.5px;" width="17" height="16" viewBox="0 0 17 16"><rect x="0.5" y="4.8" width="15.4" height="6.4" fill="#e4ebf6" stroke="#a9b9d4" stroke-width="0.9"/><rect x="2.4" y="6.6" width="6.6" height="2.8" fill="#9fb0cc"/><path d="M10.4 0.6h4.6M10.4 15.4h4.6M12.7 0.6v14.8" stroke="#9fb0cc" stroke-width="1.2"/></svg>
<span class="t" style="left:1655.6px;top:127px;color:#444;font-size:11.5px;letter-spacing:-0.096px;">Organize</span>
<div class="r" style="left:1720px;top:55px;width:1px;height:86px;background:#e2e3e4;"></div>
<div class="r" style="left:1723.3px;top:55.3px;width:41.5px;height:86.3px;background:#ebf1f7;box-sizing:border-box;border:1px solid #b5d5f5;"></div>
<div class="r" style="left:1729px;top:60px;width:30px;height:29.7px;background:#f5f6f7;box-sizing:border-box;border:1px solid #a8cdf3;"></div>
<svg class="r" style="left:1738px;top:64.2px;" width="13.3" height="15.8" viewBox="0 0 13.3 15.8"><defs><linearGradient id="fg3" x1="0" y1="0" x2="1" y2="1"><stop offset="0" stop-color="#ffeaa8"/><stop offset="1" stop-color="#ffd866"/></linearGradient></defs>
      <path d="M0.3 0.3h11.8v8.8h1.2v6.7H0.3z" fill="url(#fg3)" stroke="#f3cd5c" stroke-width="0.6"/>
      <path d="M10.4 9.2h2.5v6.2h-2.5z" fill="#ffe595" stroke="#ecbd45" stroke-width="0.7"/></svg>
<span class="t" style="left:1732.4px;top:94px;color:#0a0a0a;font-size:11.5px;letter-spacing:-0.139px;">New</span>
<svg class="r" style="left:1740.8px;top:113px;" width="5.6" height="3.2" viewBox="0 0 5.6 3.2"><path d="M0 0h5.6L2.8 3.2z" fill="#000"/></svg>
<svg class="r" style="left:1785.5px;top:62px;" width="22" height="28" viewBox="0 0 22 28"><path d="M0.6 0.6h16l4.6 4.6v22.2H0.6z" fill="#fff" stroke="#8a8a8a" stroke-width="1"/><path d="M16.6 0.6v4.6h4.6" fill="none" stroke="#8a8a8a" stroke-width="0.9"/><path d="M4 15.6l4.4 4.2l9-9.2" fill="none" stroke="#f4511e" stroke-width="2.4"/></svg>
<span class="t" style="left:1771.4px;top:94px;color:#0a0a0a;font-size:11.5px;letter-spacing:-0.142px;">Properties</span>
<svg class="r" style="left:1793.6px;top:113px;" width="5.6" height="3.2" viewBox="0 0 5.6 3.2"><path d="M0 0h5.6L2.8 3.2z" fill="#000"/></svg>
<svg class="r" style="left:1830.5px;top:59.8px;" width="15" height="16.5" viewBox="0 0 15 16.5"><rect x="0.4" y="0.4" width="11.2" height="14.2" fill="#e3eaf5" stroke="#b6c4dc" stroke-width="0.8"/><g fill="#9fb0cc"><rect x="2" y="2.4" width="2.4" height="2.4"/><rect x="2" y="6.2" width="2.4" height="2.4"/><rect x="2" y="10" width="2.4" height="2.4"/></g><path d="M6 3.4h4M6 7.2h3" stroke="#c4d0e4" stroke-width="0.8"/><path d="M10.6 8.4l3.8 4.2h-2.2v3.6h-3.2v-3.6H6.8z" fill="#9fb0cc"/></svg>
<svg class="r" style="left:1848.8px;top:65.8px;" width="5.5" height="3.2" viewBox="0 0 5.5 3.2"><path d="M0 0h5.4L2.7 3z" fill="#b4b4b4"/></svg>
<svg class="r" style="left:1830.5px;top:82px;" width="15" height="16.5" viewBox="0 0 15 16.5"><path d="M0.5 0.5h8l3 3v12H0.5z" fill="#e8eef8" stroke="#b6c4dc" stroke-width="0.8"/><path d="M3.4 13.4l1-3l7.6-7.2l1.8 1.8l-7.4 7.4z" fill="#c8d3e6" stroke="#a9b9d4" stroke-width="0.7"/></svg>
<svg class="r" style="left:1829px;top:104px;" width="17" height="16.5" viewBox="0 0 17 16.5"><rect x="0.4" y="0.4" width="10" height="13" fill="#dfe7f3" stroke="#cbd7ea" stroke-width="0.6"/><circle cx="10.8" cy="10.6" r="5" fill="#eef3fb" stroke="#9fb0cc" stroke-width="1.3"/><path d="M10.8 7.6v3.2l2.2-1.6" stroke="#9fb0cc" stroke-width="1" fill="none"/><path d="M2.6 9l2.4 3.4l2-2.6" fill="#a9b9d4"/></svg>
<span class="t" style="left:1799.6px;top:127px;color:#444;font-size:11.5px;letter-spacing:0.015px;">Open</span>
<div class="r" style="left:1864px;top:55px;width:1px;height:86px;background:#e2e3e4;"></div>
<div class="r" style="left:1867.2px;top:55.3px;width:41.6px;height:86.3px;background:#ebf1f7;box-sizing:border-box;border:1px solid #b5d5f5;"></div>
<div class="r" style="left:1873px;top:60px;width:30px;height:29.7px;background:#f5f6f7;box-sizing:border-box;border:1px solid #a8cdf3;"></div>
<svg class="r" style="left:1880px;top:64px;" width="16" height="16" viewBox="0 0 16 16"><g fill="#bfe0fb" stroke="#2e8fe0" stroke-width="1.4"><rect x="0.7" y="0.7" width="6.6" height="6.6"/><rect x="8.7" y="0.7" width="6.6" height="6.6"/><rect x="0.7" y="8.7" width="6.6" height="6.6"/><rect x="8.7" y="8.7" width="6.6" height="6.6"/></g></svg>
<span class="t" style="left:1872.4px;top:94px;color:#0a0a0a;font-size:11.5px;letter-spacing:-0.461px;">Select</span>
<svg class="r" style="left:1884.6px;top:113px;" width="5.6" height="3.2" viewBox="0 0 5.6 3.2"><path d="M0 0h5.6L2.8 3.2z" fill="#000"/></svg>
<svg class="r" style="left:1467px;top:156.5px;" width="13" height="11" viewBox="0 0 13 11"><path d="M12.4 5.5H1.4M6 0.7L1.2 5.5L6 10.3" fill="none" stroke="#666" stroke-width="1.6"/></svg>
<svg class="r" style="left:1496.5px;top:156.5px;" width="13" height="11" viewBox="0 0 13 11"><path d="M0.6 5.5H11.6M7 0.7L11.8 5.5L7 10.3" fill="none" stroke="#cdcdcd" stroke-width="1.6"/></svg>
<svg class="r" style="left:1523px;top:159px;" width="7.5" height="5" viewBox="0 0 7.5 5"><path d="M0.5 0.6L3.7 3.8L6.9 0.6" fill="none" stroke="#777" stroke-width="1.2"/></svg>
<svg class="r" style="left:1541.5px;top:156px;" width="12" height="12" viewBox="0 0 12 12"><path d="M6 11.6V1.2M1 6.2L6 1.2L11 6.2" fill="none" stroke="#666" stroke-width="1.6"/></svg>
<div class="r" style="left:1560px;top:151px;width:228px;height:22px;background:#fff;box-sizing:border-box;border:1px solid #d9d9d9;"></div>
<div class="r" style="left:1770.5px;top:152px;width:1px;height:20px;background:#d9d9d9;"></div>
<svg class="r" style="left:1565.2px;top:153.2px;" width="13" height="15.6" viewBox="0 0 13 15.6"><defs><linearGradient id="fg4" x1="0" y1="0" x2="1" y2="1"><stop offset="0" stop-color="#ffeaa8"/><stop offset="1" stop-color="#ffd866"/></linearGradient></defs>
      <path d="M0.3 0.3h11.5v8.7h1.2v6.6H0.3z" fill="url(#fg4)" stroke="#f3cd5c" stroke-width="0.6"/>
      <path d="M10.1 9.1h2.5v6.1h-2.5z" fill="#ffe595" stroke="#ecbd45" stroke-width="0.7"/></svg>
<span class="t" style="left:1583.3px;top:153px;color:#333;font-size:14px;">«</span>
<span class="t" style="left:1598.3px;top:154px;color:#0a0a0a;font-size:11.5px;letter-spacing:0.076px;">AppData</span>
<svg class="r" style="left:1651.2px;top:158.5px;" width="5.5" height="8" viewBox="0 0 5.5 8"><path d="M0.8 0.8L4.4 4L0.8 7.2" fill="none" stroke="#777" stroke-width="1.2"/></svg>
<span class="t" style="left:1665.2px;top:154px;color:#0a0a0a;font-size:11.5px;letter-spacing:0.196px;">Roaming</span>
<svg class="r" style="left:1758px;top:160px;" width="10" height="6.5" viewBox="0 0 10 6.5"><path d="M0.6 0.8L4.9 5.2L9.2 0.8" fill="none" stroke="#555" stroke-width="1.3"/></svg>
<svg class="r" style="left:1774.5px;top:157px;" width="11" height="12" viewBox="0 0 11 12"><path d="M6.6 1.4A4.6 4.6 0 1 1 2.2 3.2" fill="none" stroke="#666" stroke-width="1.2"/><path d="M6.4 0v4.2h-3.6" fill="none" stroke="#666" stroke-width="1.2" transform="rotate(8 6 2)"/></svg>
<div class="r" style="left:1800px;top:151px;width:125px;height:22px;background:#fff;box-sizing:border-box;border:1px solid #d9d9d9;"></div>
<span class="t" style="left:1809.2px;top:154px;color:#6d6d6d;font-size:11.5px;letter-spacing:-0.018px;">Search Roaming</span>
<svg class="r" style="left:1909px;top:157px;" width="12" height="12" viewBox="0 0 12 12"><circle cx="7.6" cy="4.4" r="3.6" fill="none" stroke="#555" stroke-width="1.3"/><path d="M5 7L0.6 11.4" stroke="#555" stroke-width="1.6"/></svg>
<div class="r" style="left:1612.5px;top:180px;width:1px;height:817px;background:#f4f4f4;"></div>
<svg class="r" style="left:1479.5px;top:201.5px;" width="15" height="12" viewBox="0 0 15 12"><path d="M8.6 0.4l1.7 3.6l3.9 0.5l-2.9 2.7l0.8 3.9l-3.5-2l-3.5 2l0.8-3.9l-2.9-2.7l3.9-0.5z" fill="#2e8fe0"/><path d="M0.5 5.4h3M0.2 8h3.4M1 10.6h3" stroke="#2e8fe0" stroke-width="0.9"/></svg>
<span class="t" style="left:1499.4px;top:200px;color:#0a0a0a;font-size:11.5px;letter-spacing:-0.083px;">Quick access</span>
<span class="t" style="left:1507.5px;top:224px;color:#0a0a0a;font-size:11.5px;letter-spacing:0.002px;">Desktop</span>
<svg class="r" style="left:1597px;top:227.4px;" width="11" height="11" viewBox="0 0 11 11"><g transform="rotate(45 5.5 5.5)" fill="#8e9ba3"><rect x="3.6" y="0" width="3.8" height="5.2"/><rect x="2.2" y="4.6" width="6.6" height="1.6"/><rect x="5" y="6.2" width="1" height="5"/></g></svg>
<svg class="r" style="left:1486px;top:226px;" width="16" height="12" viewBox="0 0 16 12"><defs><linearGradient id="dg" x1="0" y1="0" x2="1" y2="1"><stop offset="0" stop-color="#1a8cf0"/><stop offset="1" stop-color="#3aa6ff"/></linearGradient></defs><rect x="0" y="0" width="16" height="12" fill="url(#dg)"/><rect x="0" y="9.6" width="16" height="2.4" fill="#1565c0"/><path d="M1.4 10.8h9M12 10.8h0.8M13.8 10.8h0.8" stroke="#e3f2fd" stroke-width="0.8"/></svg>
<span class="t" style="left:1507.5px;top:248px;color:#0a0a0a;font-size:11.5px;letter-spacing:0.166px;">Downloads</span>
<svg class="r" style="left:1597px;top:251.4px;" width="11" height="11" viewBox="0 0 11 11"><g transform="rotate(45 5.5 5.5)" fill="#8e9ba3"><rect x="3.6" y="0" width="3.8" height="5.2"/><rect x="2.2" y="4.6" width="6.6" height="1.6"/><rect x="5" y="6.2" width="1" height="5"/></g></svg>
<svg class="r" style="left:1486px;top:248px;" width="16" height="16" viewBox="0 0 16 16"><path d="M5 0.2h6v7.4h4.6L8 15.8L0.4 7.6H5z" fill="#2e86de"/></svg>
<span class="t" style="left:1507.5px;top:272px;color:#0a0a0a;font-size:11.5px;letter-spacing:0.225px;">Documents</span>
<svg class="r" style="left:1597px;top:275.4px;" width="11" height="11" viewBox="0 0 11 11"><g transform="rotate(45 5.5 5.5)" fill="#8e9ba3"><rect x="3.6" y="0" width="3.8" height="5.2"/><rect x="2.2" y="4.6" width="6.6" height="1.6"/><rect x="5" y="6.2" width="1" height="5"/></g></svg>
<svg class="r" style="left:1488px;top:272px;" width="12.5" height="16" viewBox="0 0 12.5 16"><path d="M0.5 0.5h8l3.4 3.4v11.6H0.5z" fill="#fff" stroke="#9a9a9a" stroke-width="0.9"/><path d="M2.4 5.4h7.6M2.4 7.6h7.6M2.4 9.8h3M2.4 12h3" stroke="#4a90d9" stroke-width="0.9"/><rect x="6.4" y="9.4" width="3.6" height="3" fill="#5c9e5c"/><path d="M3 3.6l1.4-2l1.2 2z" fill="#4a90d9"/></svg>
<span class="t" style="left:1507.5px;top:296px;color:#0a0a0a;font-size:11.5px;letter-spacing:-0.006px;">Pictures</span>
<svg class="r" style="left:1597px;top:299.4px;" width="11" height="11" viewBox="0 0 11 11"><g transform="rotate(45 5.5 5.5)" fill="#8e9ba3"><rect x="3.6" y="0" width="3.8" height="5.2"/><rect x="2.2" y="4.6" width="6.6" height="1.6"/><rect x="5" y="6.2" width="1" height="5"/></g></svg>
<svg class="r" style="left:1486px;top:298px;" width="16" height="12" viewBox="0 0 16 12"><rect x="0.4" y="0.4" width="15.2" height="11.2" fill="#fff" stroke="#9a9a9a" stroke-width="0.8"/><rect x="1.8" y="1.8" width="12.4" height="8.4" fill="#9dd0f5"/><path d="M1.8 10.2V6.6c3-1.4 6-0.4 12.4 2.2v1.4z" fill="#4f7d5a"/><path d="M1.8 4.4c4-1 8-0.6 12.4 0.6v1.6c-4-1-8-1.4-12.4-0.6z" fill="#e8f4fd"/></svg>
<span class="t" style="left:1507.5px;top:320px;color:#0a0a0a;font-size:11.5px;letter-spacing:0.214px;">Music</span>
<svg class="r" style="left:1488.3px;top:320px;" width="12" height="16" viewBox="0 0 12 16"><path d="M4.6 0.3c0.6 2.6 5.6 3.4 5.8 7.6c0 1.4-0.6 2.4-1.2 3c0.4-2.6-1.4-4.6-3.2-5.2v7.4c0 1.6-1.4 2.8-3.2 2.8c-1.6 0-2.6-0.9-2.6-2.1c0-1.5 1.5-2.7 3.3-2.7c0.5 0 0.8 0.1 1.1 0.2z" fill="#1e90ff"/></svg>
<span class="t" style="left:1507.5px;top:344px;color:#0a0a0a;font-size:11.5px;letter-spacing:0.246px;">plug110</span>
<svg class="r" style="left:1487.5px;top:343.8px;" width="13.5" height="16" viewBox="0 0 13.5 16"><defs><linearGradient id="fg5" x1="0" y1="0" x2="1" y2="1"><stop offset="0" stop-color="#ffeaa8"/><stop offset="1" stop-color="#ffd866"/></linearGradient></defs>
      <path d="M0.3 0.3h12.0v9.0h1.2v6.7H0.3z" fill="url(#fg5)" stroke="#f3cd5c" stroke-width="0.6"/>
      <path d="M10.6 9.4h2.5v6.2h-2.5z" fill="#ffe595" stroke="#ecbd45" stroke-width="0.7"/></svg>
<span class="t" style="left:1507.5px;top:368px;color:#0a0a0a;font-size:11.5px;letter-spacing:-0.032px;">Tools</span>
<svg class="r" style="left:1487.5px;top:367.8px;" width="13.5" height="16" viewBox="0 0 13.5 16"><defs><linearGradient id="fg6" x1="0" y1="0" x2="1" y2="1"><stop offset="0" stop-color="#ffeaa8"/><stop offset="1" stop-color="#ffd866"/></linearGradient></defs>
      <path d="M0.3 0.3h12.0v9.0h1.2v6.7H0.3z" fill="url(#fg6)" stroke="#f3cd5c" stroke-width="0.6"/>
      <path d="M10.6 9.4h2.5v6.2h-2.5z" fill="#ffe595" stroke="#ecbd45" stroke-width="0.7"/></svg>
<span class="t" style="left:1507.5px;top:392px;color:#0a0a0a;font-size:11.5px;letter-spacing:-0.095px;">Videos</span>
<svg class="r" style="left:1487px;top:392.7px;" width="14" height="15" viewBox="0 0 14 15"><rect x="0" y="0" width="14" height="15" fill="#3a3a3a"/><rect x="2.6" y="1" width="8.8" height="6" fill="#d8a23a"/><rect x="2.6" y="8" width="8.8" height="6" fill="#3f7fc4"/><rect x="4" y="2" width="3" height="3" fill="#c0392b"/><rect x="7" y="9.4" width="3.4" height="3" fill="#e0c060"/><path d="M1.3 1v13.4M12.7 1v13.4" stroke="#e8e8e8" stroke-width="1" stroke-dasharray="1.2 1.2"/></svg>
<svg class="r" style="left:1477.5px;top:426.3px;" width="17" height="11" viewBox="0 0 17 11"><path d="M3.6 10.8C1.6 10.8 0.2 9.5 0.2 7.8C0.2 6.2 1.4 5 3 4.8C3.6 2.2 5.8 0.4 8.4 0.4C10.6 0.4 12.4 1.6 13.2 3.6C15.2 3.8 16.8 5.3 16.8 7.3C16.8 9.3 15.2 10.8 13.2 10.8z" fill="#1490df"/><path d="M0.6 9.2C2 6 6 5.6 9.6 8.2l3.4 2.6H3.6C2.2 10.8 1.2 10.2 0.6 9.2z" fill="#0a64c8"/></svg>
<span class="t" style="left:1499.3px;top:424px;color:#0a0a0a;font-size:11.5px;letter-spacing:0.053px;">OneDrive</span>
<div class="r" style="left:1460.4px;top:452px;width:149.5px;height:24px;background:#d9d9d9;"></div>
<svg class="r" style="left:1477.5px;top:457px;" width="17" height="15.5" viewBox="0 0 17 15.5"><rect x="0.6" y="0.4" width="15.8" height="10.6" fill="#5bc4f5" stroke="#2f9bd8" stroke-width="0.8"/><path d="M1.4 1.2h14.2L1.4 9z" fill="#8fdaf9"/><path d="M5 13h7" stroke="#8a9aa8" stroke-width="1"/><path d="M0.4 15h16.2" stroke="#9fb4c8" stroke-width="0.9"/></svg>
<span class="t" style="left:1499.3px;top:456px;color:#0a0a0a;font-size:11.5px;letter-spacing:-0.315px;">This PC</span>
<svg class="r" style="left:1477.5px;top:487.5px;" width="17.5" height="16.5" viewBox="0 0 17.5 16.5"><circle cx="11" cy="6.4" r="6" fill="#5aa9e6"/><path d="M7 2.4c2 1 2.4 2.6 1.6 4.2c2 0.4 3.4 1.8 3.2 4M11 0.4c1.6 1.2 3.4 1.6 5.4 3.6" stroke="#d6ecfb" stroke-width="1.1" fill="none"/><rect x="0.5" y="6.2" width="10.6" height="7.2" fill="#4fb2f2" stroke="#2a86c8" stroke-width="0.8"/><path d="M1.2 7h9.2L1.2 12.6z" fill="#8fd2fa"/><path d="M3.6 15.8h4.6M5.9 13.6v2" stroke="#7d8a96" stroke-width="0.9"/></svg>
<span class="t" style="left:1499.3px;top:488px;color:#0a0a0a;font-size:11.5px;letter-spacing:0.359px;">Network</span>
<span class="t" style="left:1631.6px;top:185px;color:#4c607a;font-size:11.5px;letter-spacing:0.278px;">Name</span>
<svg class="r" style="left:1751.8px;top:180px;" width="8.5" height="5.5" viewBox="0 0 8.5 5.5"><path d="M0.5 4.8L4.2 1L7.9 4.8" fill="none" stroke="#777" stroke-width="1"/></svg>
<div class="r" style="left:1885.5px;top:180px;width:1px;height:25px;background:#e5e5e5;"></div>
<span class="t" style="left:1892.8px;top:185px;color:#4c607a;font-size:11.5px;letter-spacing:0.426px;">Date</span>
<svg class="r" style="left:1634px;top:213px;" width="13.2" height="16" viewBox="0 0 13.2 16"><defs><linearGradient id="fg7" x1="0" y1="0" x2="1" y2="1"><stop offset="0" stop-color="#ffeaa8"/><stop offset="1" stop-color="#ffd866"/></linearGradient></defs>
      <path d="M0.3 0.3h11.7v9.0h1.2v6.7H0.3z" fill="url(#fg7)" stroke="#f3cd5c" stroke-width="0.6"/>
      <path d="M10.3 9.4h2.5v6.2h-2.5z" fill="#ffe595" stroke="#ecbd45" stroke-width="0.7"/></svg>
<span class="t" style="left:1652.3px;top:214px;color:#0a0a0a;font-size:11.5px;letter-spacing:0.347px;">Adobe</span>
<span class="t" style="left:1891.8px;top:214px;color:#6d6d6d;font-size:11.5px;letter-spacing:-0.013px;">08-01-2021</span>
<svg class="r" style="left:1634px;top:234px;" width="13.2" height="16" viewBox="0 0 13.2 16"><defs><linearGradient id="fg8" x1="0" y1="0" x2="1" y2="1"><stop offset="0" stop-color="#ffeaa8"/><stop offset="1" stop-color="#ffd866"/></linearGradient></defs>
      <path d="M0.3 0.3h11.7v9.0h1.2v6.7H0.3z" fill="url(#fg8)" stroke="#f3cd5c" stroke-width="0.6"/>
      <path d="M10.3 9.4h2.5v6.2h-2.5z" fill="#ffe595" stroke="#ecbd45" stroke-width="0.7"/></svg>
<span class="t" style="left:1652.3px;top:235px;color:#0a0a0a;font-size:11.5px;letter-spacing:-0.102px;">de4dot 3.1.41592</span>
<span class="t" style="left:1891.8px;top:235px;color:#6d6d6d;font-size:11.5px;letter-spacing:-0.013px;">08-01-2021</span>
<svg class="r" style="left:1634px;top:255px;" width="13.2" height="16" viewBox="0 0 13.2 16"><defs><linearGradient id="fg9" x1="0" y1="0" x2="1" y2="1"><stop offset="0" stop-color="#ffeaa8"/><stop offset="1" stop-color="#ffd866"/></linearGradient></defs>
      <path d="M0.3 0.3h11.7v9.0h1.2v6.7H0.3z" fill="url(#fg9)" stroke="#f3cd5c" stroke-width="0.6"/>
      <path d="M10.3 9.4h2.5v6.2h-2.5z" fill="#ffe595" stroke="#ecbd45" stroke-width="0.7"/></svg>
<span class="t" style="left:1652.3px;top:256px;color:#0a0a0a;font-size:11.5px;letter-spacing:-0.042px;">dnSpy</span>
<span class="t" style="left:1891.8px;top:256px;color:#6d6d6d;font-size:11.5px;letter-spacing:-0.013px;">08-01-2021</span>
<svg class="r" style="left:1634px;top:276px;" width="13.2" height="16" viewBox="0 0 13.2 16"><defs><linearGradient id="fg10" x1="0" y1="0" x2="1" y2="1"><stop offset="0" stop-color="#ffeaa8"/><stop offset="1" stop-color="#ffd866"/></linearGradient></defs>
      <path d="M0.3 0.3h11.7v9.0h1.2v6.7H0.3z" fill="url(#fg10)" stroke="#f3cd5c" stroke-width="0.6"/>
      <path d="M10.3 9.4h2.5v6.2h-2.5z" fill="#ffe595" stroke="#ecbd45" stroke-width="0.7"/></svg>
<span class="t" style="left:1652.3px;top:277px;color:#0a0a0a;font-size:11.5px;letter-spacing:-0.724px;">Java</span>
<span class="t" style="left:1891.8px;top:277px;color:#6d6d6d;font-size:11.5px;letter-spacing:-0.013px;">17-04-2020</span>
<svg class="r" style="left:1634px;top:297px;" width="13.2" height="16" viewBox="0 0 13.2 16"><defs><linearGradient id="fg11" x1="0" y1="0" x2="1" y2="1"><stop offset="0" stop-color="#ffeaa8"/><stop offset="1" stop-color="#ffd866"/></linearGradient></defs>
      <path d="M0.3 0.3h11.7v9.0h1.2v6.7H0.3z" fill="url(#fg11)" stroke="#f3cd5c" stroke-width="0.6"/>
      <path d="M10.3 9.4h2.5v6.2h-2.5z" fill="#ffe595" stroke="#ecbd45" stroke-width="0.7"/></svg>
<span class="t" style="left:1652.3px;top:298px;color:#0a0a0a;font-size:11.5px;letter-spacing:0.449px;">Microsoft</span>
<span class="t" style="left:1891.8px;top:298px;color:#6d6d6d;font-size:11.5px;letter-spacing:-0.013px;">08-01-2021</span>
<div class="r" style="left:1614px;top:997.5px;width:305px;height:16px;background:#f0f0f0;"></div>
<svg class="r" style="left:1618.5px;top:1001.5px;" width="7" height="9" viewBox="0 0 7 9"><path d="M6 0.8L1.4 4.5L6 8.2" fill="none" stroke="#4a4a4a" stroke-width="1.7"/></svg>
<div class="r" style="left:1631px;top:997.5px;width:144px;height:16px;background:#cdcdcd;"></div>
<span class="t" style="left:1468.6px;top:1018px;color:#0a0a0a;font-size:11.5px;letter-spacing:0.075px;">5 items</span>
<div class="r" style="left:1516.5px;top:1020px;width:1px;height:14px;background:#f0f0f0;"></div>
<div class="r" style="left:1884.2px;top:1014px;width:21.6px;height:23px;background:#cce8ff;box-sizing:border-box;border:1px solid #3a9be0;"></div>
<svg class="r" style="left:1888.5px;top:1019px;" width="14" height="13" viewBox="0 0 14 13"><g fill="#fff" stroke="#5a6a7a" stroke-width="0.7"><rect x="0.4" y="0.6" width="2.6" height="2.6"/><rect x="0.4" y="5" width="2.6" height="2.6"/><rect x="0.4" y="9.4" width="2.6" height="2.6"/></g><path d="M4.6 1.9h3.6M9.6 1.9h3.6M4.6 6.3h3.6M9.6 6.3h3.6M4.6 10.7h3.6M9.6 10.7h3.6" stroke="#5a6a7a" stroke-width="0.9"/><rect x="1.1" y="10.1" width="1.2" height="1.2" fill="#d33"/></svg>
<div class="r" style="left:1910.5px;top:1019px;width:9px;height:11px;background:#fff;box-sizing:border-box;border:1px solid #7a8a9a;"></div>
<div class="r" style="left:1911.5px;top:1023px;width:8px;height:6px;background:#5a8fc0;"></div>
<div class="r" style="left:1460px;top:1037px;width:459px;height:5px;background:#c8d0d9;"></div>
<div class="r" style="left:1460px;top:1037px;width:459px;height:1px;background:#aab2bb;"></div>
<div class="r" style="left:442px;top:1038px;width:48px;height:4px;background:#e8f3f7;"></div>
</body></html>
